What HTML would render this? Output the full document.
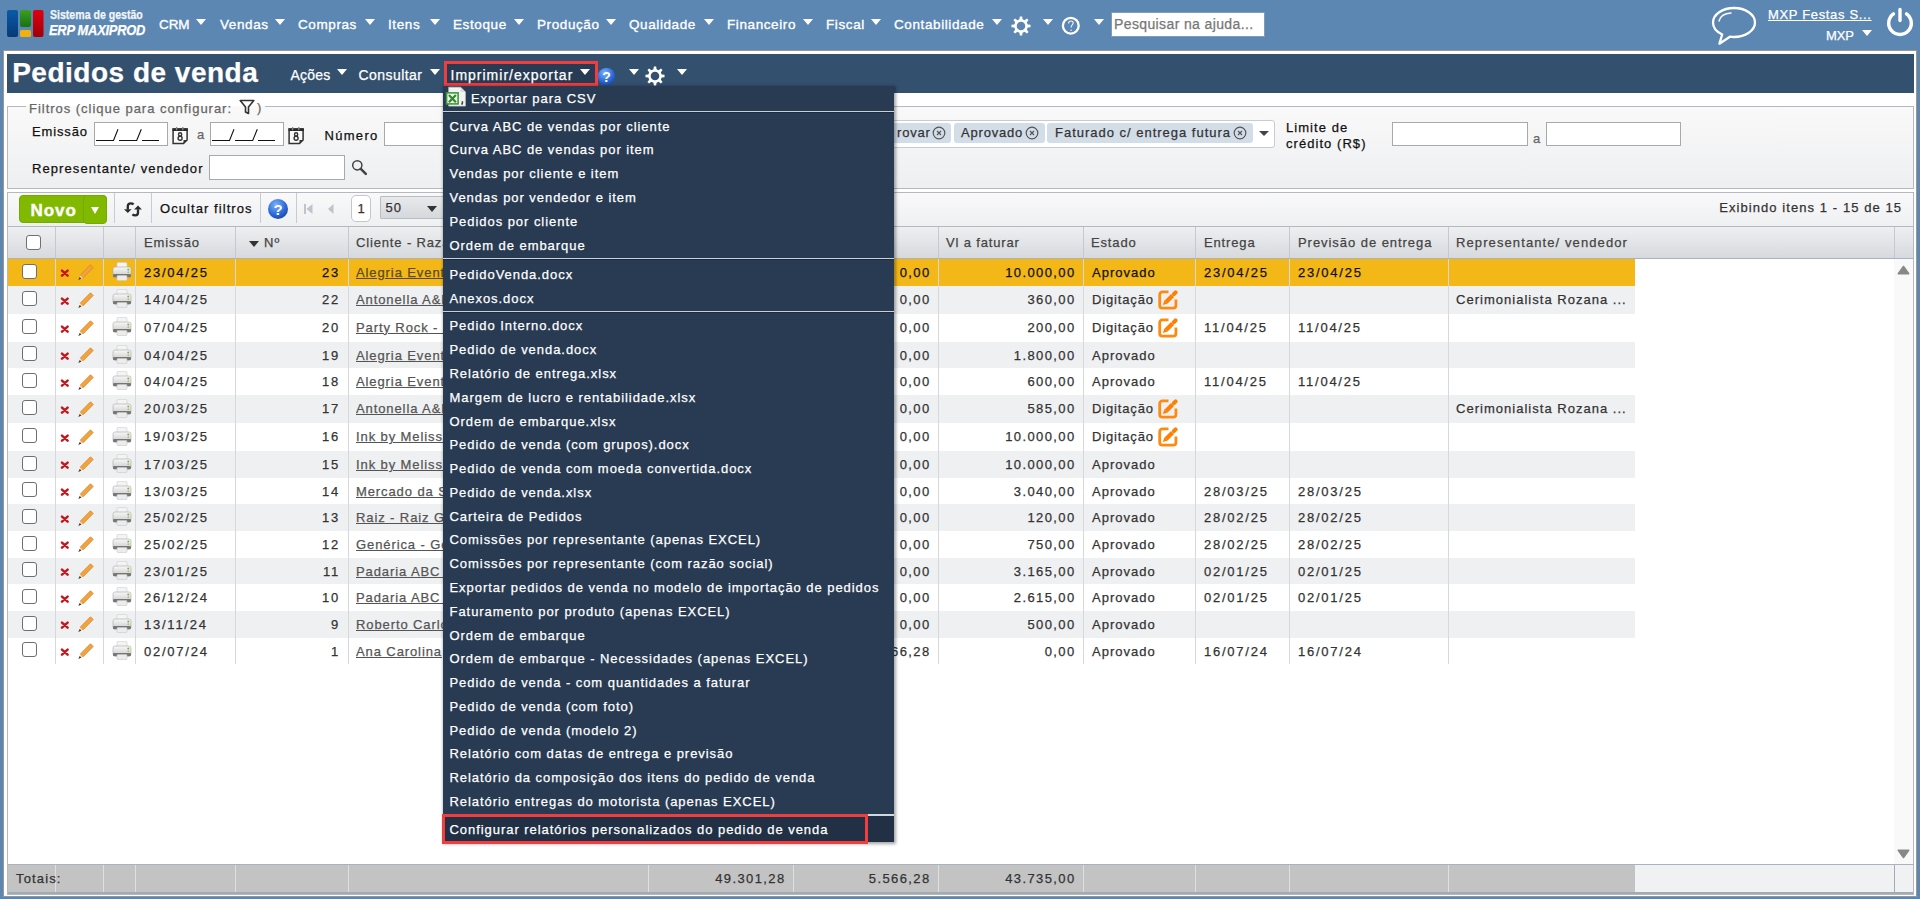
<!DOCTYPE html>
<html><head><meta charset="utf-8">
<style>
*{box-sizing:border-box;margin:0;padding:0}
html,body{width:1920px;height:899px;overflow:hidden}
body{position:relative;background:#5c87b3;font-family:"Liberation Sans",sans-serif;font-size:13px;color:#222;letter-spacing:.9px;-webkit-text-stroke-width:.25px}
.a{position:absolute;white-space:nowrap}
.tri{position:absolute;width:0;height:0;border-left:5px solid transparent;border-right:5px solid transparent;border-top:6px solid #fff}
.tm{position:absolute;top:16px;color:#fff;font-size:13.5px;letter-spacing:.6px;line-height:17px;-webkit-text-stroke-width:.35px}
.panel{position:absolute;left:3px;top:50px;width:1914px;height:847px;background:#fff;border:1px solid #9c9690}
.band{position:absolute;left:7px;top:54px;width:1907px;height:39px;background:#34506f}
.bm{position:absolute;top:66px;color:#fff;font-size:14px;letter-spacing:.85px;line-height:18px}
.inp{background:#fff;border:1px solid #a9a9a9}
.tag{top:123px;height:20px;background:#d3dde8;border-radius:3px}
.num{font-size:13px;letter-spacing:1.76px}
.mn{font-size:13px;letter-spacing:1.38px}
.mi{color:#fff;font-size:13px;letter-spacing:.95px;line-height:16px}
</style></head><body>
<!-- TOP BAR -->
<svg class="a" style="left:6px;top:9px" width="40" height="30" viewBox="0 0 40 30">
 <defs>
  <linearGradient id="lb" x1="0" y1="0" x2="0" y2="1"><stop offset="0" stop-color="#0a5aa8"/><stop offset="1" stop-color="#063a78"/></linearGradient>
  <linearGradient id="lg" x1="0" y1="0" x2="0" y2="1"><stop offset="0" stop-color="#3aa020"/><stop offset="1" stop-color="#1a7010"/></linearGradient>
  <linearGradient id="lr" x1="0" y1="0" x2="0" y2="1"><stop offset="0" stop-color="#e00010"/><stop offset="1" stop-color="#a00008"/></linearGradient>
 </defs>
 <rect x="1" y="1" width="11" height="27" rx="2" fill="url(#lb)"/>
 <rect x="14" y="1" width="11" height="17" rx="2" fill="url(#lg)"/>
 <rect x="14" y="21" width="11" height="7" rx="1.5" fill="#f0b010"/>
 <rect x="27" y="1" width="10.5" height="27" rx="2" fill="url(#lr)"/>
</svg>
<div class="a" style="left:50px;top:8px;color:#fff;font-size:12px;font-weight:700;letter-spacing:0;line-height:14px;opacity:.92;transform:scaleX(.88);transform-origin:0 0">Sistema de gestão</div>
<div class="a" style="left:49px;top:21px;color:#fff;font-size:15px;font-weight:700;font-style:italic;letter-spacing:-.3px;line-height:17px;transform:scaleX(.86);transform-origin:0 0">ERP MAXIPROD</div>

<div class="tm" style="left:159px;letter-spacing:-.1px">CRM</div><div class="tri" style="left:196px;top:19px"></div>
<div class="tm" style="left:220px">Vendas</div><div class="tri" style="left:275px;top:19px"></div>
<div class="tm" style="left:298px">Compras</div><div class="tri" style="left:365px;top:19px"></div>
<div class="tm" style="left:388px">Itens</div><div class="tri" style="left:430px;top:19px"></div>
<div class="tm" style="left:453px">Estoque</div><div class="tri" style="left:514px;top:19px"></div>
<div class="tm" style="left:537px">Produção</div><div class="tri" style="left:606px;top:19px"></div>
<div class="tm" style="left:629px">Qualidade</div><div class="tri" style="left:704px;top:19px"></div>
<div class="tm" style="left:727px">Financeiro</div><div class="tri" style="left:803px;top:19px"></div>
<div class="tm" style="left:826px">Fiscal</div><div class="tri" style="left:871px;top:19px"></div>
<div class="tm" style="left:894px">Contabilidade</div><div class="tri" style="left:992px;top:19px"></div>
<!-- gear -->
<svg class="a" style="left:1011px;top:16px" width="20" height="20" viewBox="0 0 20 20"><path fill="#fff" fill-rule="evenodd" d="M8.45 3.28 L8.83 0.47 L11.17 0.47 L11.55 3.28 L12.59 3.75 L13.66 4.15 L15.91 2.44 L17.56 4.09 L15.85 6.34 L16.25 7.41 L16.72 8.45 L19.53 8.83 L19.53 11.17 L16.72 11.55 L16.25 12.59 L15.85 13.66 L17.56 15.91 L15.91 17.56 L13.66 15.85 L12.59 16.25 L11.55 16.72 L11.17 19.53 L8.83 19.53 L8.45 16.72 L7.41 16.25 L6.34 15.85 L4.09 17.56 L2.44 15.91 L4.15 13.66 L3.75 12.59 L3.28 11.55 L0.47 11.17 L0.47 8.83 L3.28 8.45 L3.75 7.41 L4.15 6.34 L2.44 4.09 L4.09 2.44 L6.34 4.15 L7.41 3.75ZM14.3 10A4.3 4.3 0 1 0 5.7 10A4.3 4.3 0 1 0 14.3 10Z"/></svg>
<div class="tri" style="left:1043px;top:19px"></div>
<!-- help outline -->
<svg class="a" style="left:1060.6px;top:16px" width="20" height="20" viewBox="0 0 20 20"><circle cx="9.8" cy="9.7" r="7.9" fill="none" stroke="#fff" stroke-width="2.3"/><path d="M7.6 7.4c0-1.5 1-2.4 2.3-2.4s2.3.9 2.3 2.1c0 1.6-2 1.9-2 3.7v.7" fill="none" stroke="#e8eef5" stroke-width="1.2"/><circle cx="10.1" cy="14.2" r=".8" fill="#e8eef5"/></svg>
<div class="tri" style="left:1094px;top:19px"></div>
<div class="a" style="left:1111px;top:12px;width:154px;height:25px;background:#fff;border:1px solid #7f9cbf"></div>
<div class="a" style="left:1114px;top:16px;color:#777;font-size:14px;letter-spacing:.38px;line-height:17px">Pesquisar na ajuda...</div>
<!-- chat -->
<svg class="a" style="left:1710px;top:5px" width="48" height="42" viewBox="0 0 48 42"><path d="M24 3C12.5 3 3 9.6 3 17.5c0 5 3.6 9.4 9.2 12l-2.8 9.2 10.5-7c1.3.2 2.7.3 4.1.3 11.5 0 21-6.6 21-14.5S35.5 3 24 3z" fill="none" stroke="#fff" stroke-width="2.3" stroke-linejoin="round"/><path d="M9 16c1-4.5 5.5-7.5 12-8" fill="none" stroke="#fff" stroke-width="1.4" stroke-linecap="round"/></svg>
<div class="a" style="left:1768px;top:7px;color:#fff;font-size:13px;letter-spacing:.66px;line-height:16px;text-decoration:underline">MXP Festas S...</div>
<div class="a" style="left:1826px;top:28px;color:#fff;font-size:13px;letter-spacing:-.1px;line-height:16px">MXP</div>
<div class="tri" style="left:1862px;top:30px"></div>
<!-- power -->
<svg class="a" style="left:1886px;top:6px" width="28" height="32" viewBox="0 0 28 32"><path d="M7.5 7.9A11.3 11.3 0 1 0 20.5 7.9" fill="none" stroke="#fff" stroke-width="3.4" stroke-linecap="round"/><line x1="14" y1="3.5" x2="14" y2="14.6" stroke="#fff" stroke-width="3.4" stroke-linecap="round"/></svg>

<!-- PANEL -->
<div class="panel"></div>
<div class="band"></div>
<div class="a" style="left:12.2px;top:57px;color:#fff;font-size:28px;font-weight:700;letter-spacing:.5px;line-height:32px">Pedidos de venda</div>
<div class="bm" style="left:290.5px;letter-spacing:.2px">Ações</div><div class="tri" style="left:337px;top:69px"></div>
<div class="bm" style="left:358.5px;letter-spacing:.45px">Consultar</div><div class="tri" style="left:430px;top:69px"></div>
<div class="a" style="left:444px;top:61px;width:154px;height:25px;background:#283b54;border:3px solid #ef3d40"></div>
<div class="bm" style="left:450.5px;letter-spacing:1px">Imprimir/exportar</div><div class="tri" style="left:580px;top:69px"></div>


<!-- band icons -->
<svg class="a" style="left:597px;top:66px" width="19" height="20" viewBox="0 0 19 20"><defs><radialGradient id="hb" cx=".4" cy=".3" r=".8"><stop offset="0" stop-color="#7fb2ff"/><stop offset=".6" stop-color="#2a6ad8"/><stop offset="1" stop-color="#1a3f9a"/></radialGradient></defs><circle cx="9.5" cy="10.5" r="8.8" fill="url(#hb)"/><text x="9.6" y="15.5" text-anchor="middle" font-family="Liberation Sans" font-weight="700" font-size="14" fill="#fff" letter-spacing="0">?</text></svg>
<div class="tri" style="left:629px;top:69px"></div>
<svg class="a" style="left:645px;top:66px" width="20" height="20" viewBox="0 0 20 20"><path fill="#fff" fill-rule="evenodd" d="M8.45 3.28 L8.83 0.47 L11.17 0.47 L11.55 3.28 L12.59 3.75 L13.66 4.15 L15.91 2.44 L17.56 4.09 L15.85 6.34 L16.25 7.41 L16.72 8.45 L19.53 8.83 L19.53 11.17 L16.72 11.55 L16.25 12.59 L15.85 13.66 L17.56 15.91 L15.91 17.56 L13.66 15.85 L12.59 16.25 L11.55 16.72 L11.17 19.53 L8.83 19.53 L8.45 16.72 L7.41 16.25 L6.34 15.85 L4.09 17.56 L2.44 15.91 L4.15 13.66 L3.75 12.59 L3.28 11.55 L0.47 11.17 L0.47 8.83 L3.28 8.45 L3.75 7.41 L4.15 6.34 L2.44 4.09 L4.09 2.44 L6.34 4.15 L7.41 3.75ZM14.3 10A4.3 4.3 0 1 0 5.7 10A4.3 4.3 0 1 0 14.3 10Z"/></svg>
<div class="tri" style="left:677px;top:69px"></div>

<!-- FILTER FIELDSET -->
<div class="a" style="left:7px;top:106px;width:1907px;height:83px;border:1px solid #b4b9c0;background:linear-gradient(#f9f9f9,#eeeff1)"></div>
<div class="a" style="left:26px;top:106px;width:239px;height:1px;background:#f9f9f9"></div>
<div class="a" style="left:29px;top:100.5px;color:#666;font-size:13px;letter-spacing:.97px;line-height:16px">Filtros (clique para configurar:</div>
<svg class="a" style="left:239px;top:99px" width="16" height="16" viewBox="0 0 16 16"><path d="M1.2 1.5h13.6L9.5 8v6.5L6.5 13V8z" fill="none" stroke="#333" stroke-width="1.6" stroke-linejoin="round"/></svg>
<div class="a" style="left:257px;top:100px;color:#666;font-size:13px;line-height:16px">)</div>

<div class="a" style="left:32px;top:124px;color:#111;font-size:13px;letter-spacing:.85px;line-height:16px">Emissão</div>
<div class="a inp" style="left:94px;top:122px;width:74px;height:24px"></div>
<svg class="a" style="left:96px;top:128px" width="64" height="14" viewBox="0 0 64 14"><path d="M0 12.5h17.5l4.5-11.3M23 12.5h17.7l4.6-11.3M46 12.5h17" fill="none" stroke="#111" stroke-width="1.1"/></svg>
<svg class="a" style="left:172px;top:127px" width="17" height="18" viewBox="0 0 17 18"><path d="M1.1 2.1h14v10.8l-3.6 3.7H1.1z" fill="#fbfbfb" stroke="#333" stroke-width="1.5"/><rect x="0.5" y="1.4" width="15.3" height="2.6" fill="#2a2a2a"/><path d="M4.6 0v3.2M10.8 0v3.2" stroke="#888" stroke-width="1.3"/><circle cx="8.1" cy="7.4" r="1.6" fill="none" stroke="#333" stroke-width="1.4"/><circle cx="8.1" cy="11.3" r="2" fill="none" stroke="#333" stroke-width="1.4"/><path d="M11.5 16.6v-3.7h3.6z" fill="#333"/></svg>
<div class="a" style="left:197px;top:127px;color:#666;font-size:13px;line-height:16px">a</div>
<div class="a inp" style="left:210px;top:122px;width:74px;height:24px"></div>
<svg class="a" style="left:212px;top:128px" width="64" height="14" viewBox="0 0 64 14"><path d="M0 12.5h17.5l4.5-11.3M23 12.5h17.7l4.6-11.3M46 12.5h17" fill="none" stroke="#111" stroke-width="1.1"/></svg>
<svg class="a" style="left:288px;top:127px" width="17" height="18" viewBox="0 0 17 18"><path d="M1.1 2.1h14v10.8l-3.6 3.7H1.1z" fill="#fbfbfb" stroke="#333" stroke-width="1.5"/><rect x="0.5" y="1.4" width="15.3" height="2.6" fill="#2a2a2a"/><path d="M4.6 0v3.2M10.8 0v3.2" stroke="#888" stroke-width="1.3"/><circle cx="8.1" cy="7.4" r="1.6" fill="none" stroke="#333" stroke-width="1.4"/><circle cx="8.1" cy="11.3" r="2" fill="none" stroke="#333" stroke-width="1.4"/><path d="M11.5 16.6v-3.7h3.6z" fill="#333"/></svg>
<div class="a" style="left:324.5px;top:128px;color:#111;font-size:13px;letter-spacing:1.3px;line-height:16px">Número</div>
<div class="a inp" style="left:384px;top:122px;width:70px;height:24px"></div>
<div class="a" style="left:32px;top:161px;color:#111;font-size:13px;letter-spacing:1.08px;line-height:16px">Representante/ vendedor</div>
<div class="a inp" style="left:209px;top:155px;width:136px;height:25px"></div>
<svg class="a" style="left:351px;top:159px" width="17" height="17" viewBox="0 0 17 17"><circle cx="6.3" cy="6.3" r="4.6" fill="none" stroke="#444" stroke-width="1.5"/><path d="M9.8 9.8l5 5" stroke="#444" stroke-width="2.6" stroke-linecap="round"/></svg>

<div class="a" style="left:880px;top:120px;width:395px;height:28px;background:#fff;border:1px solid #c8ccd2;border-radius:3px"></div>
<div class="a tag" style="left:880px;width:71px"></div>
<div class="a" style="left:897px;top:125px;font-size:13px;letter-spacing:.8px;line-height:16px;color:#333">rovar</div>
<div class="a tag" style="left:954px;width:91px"></div>
<div class="a" style="left:961px;top:125px;font-size:13px;letter-spacing:.8px;line-height:16px;color:#333">Aprovado</div>
<div class="a tag" style="left:1047px;width:206px"></div>
<div class="a" style="left:1055px;top:125px;font-size:13px;letter-spacing:.99px;line-height:16px;color:#333">Faturado c/ entrega futura</div>
<svg class="a xc" style="left:932px;top:126px" width="14" height="14" viewBox="0 0 14 14"><circle cx="7" cy="7" r="5.8" fill="none" stroke="#555" stroke-width="1.2"/><path d="M5 5l4 4M9 5l-4 4" stroke="#555" stroke-width="1.2"/></svg>
<svg class="a xc" style="left:1025px;top:126px" width="14" height="14" viewBox="0 0 14 14"><circle cx="7" cy="7" r="5.8" fill="none" stroke="#555" stroke-width="1.2"/><path d="M5 5l4 4M9 5l-4 4" stroke="#555" stroke-width="1.2"/></svg>
<svg class="a xc" style="left:1233px;top:126px" width="14" height="14" viewBox="0 0 14 14"><circle cx="7" cy="7" r="5.8" fill="none" stroke="#555" stroke-width="1.2"/><path d="M5 5l4 4M9 5l-4 4" stroke="#555" stroke-width="1.2"/></svg>
<div class="a" style="left:1259px;top:131px;width:0;height:0;border-left:5px solid transparent;border-right:5px solid transparent;border-top:5px solid #444"></div>

<div class="a" style="left:1286px;top:119.5px;color:#111;font-size:13px;letter-spacing:1.05px;line-height:16px">Limite de<br>crédito (R$)</div>
<div class="a inp" style="left:1392px;top:122px;width:136px;height:24px"></div>
<div class="a" style="left:1533px;top:131px;color:#666;font-size:13px;line-height:16px">a</div>
<div class="a inp" style="left:1546px;top:122px;width:135px;height:24px"></div>

<!-- GRID START -->
<div class="a" style="left:7px;top:192px;width:1907px;height:703px;border:1px solid #b4b9c0;background:#fff"></div>
<div class="a" style="left:8px;top:193px;width:1905px;height:34px;background:linear-gradient(#f9f9fa,#eff0f2);border-bottom:1px solid #b4b9c0"></div>
<div class="a" style="left:19px;top:195px;width:88px;height:28px;background:#80b900;border:1px solid #74ab00;border-radius:4px"></div>
<div class="a" style="left:82.5px;top:195px;width:24.5px;height:29px;background:#80b900;border:1px solid #74ab00;border-radius:4px"></div>
<div class="a" style="left:30.5px;top:201px;color:#fff;font-size:17px;font-weight:700;letter-spacing:.95px;line-height:20px;-webkit-text-stroke-width:.4px">Novo</div>
<div class="a" style="left:91px;top:207px;width:0;height:0;border-left:4px solid transparent;border-right:4px solid transparent;border-top:7px solid #fff"></div>
<div class="a" style="left:114px;top:193px;width:1px;height:30px;background:#c8ccd2"></div>
<div class="a" style="left:151px;top:193px;width:1px;height:30px;background:#c8ccd2"></div>
<div class="a" style="left:260px;top:193px;width:1px;height:30px;background:#c8ccd2"></div>
<div class="a" style="left:296px;top:193px;width:1px;height:30px;background:#c8ccd2"></div>
<svg class="a" style="left:123px;top:201px" width="20" height="17" viewBox="0 0 20 17"><path d="M10.6 3.3C9.8 2.6 8.8 2.4 7.6 2.4 5.9 2.4 4.8 3.5 4.8 5.2V8.6" fill="none" stroke="#2a2a2a" stroke-width="2.3"/><path d="M1 8.2h7.6L4.8 12z" fill="#2a2a2a"/><path d="M9.4 13.4c.8.7 1.8.9 3 .9 1.7 0 2.6-1.1 2.6-2.8V8.2" fill="none" stroke="#2a2a2a" stroke-width="2.3"/><path d="M11.1 8.6h7.8L15 4.4z" fill="#2a2a2a"/></svg>
<div class="a" style="left:160px;top:201px;color:#111;font-size:13px;letter-spacing:1.07px;line-height:16px">Ocultar filtros</div>
<svg class="a" style="left:267px;top:198px" width="22" height="22" viewBox="0 0 22 22"><defs><radialGradient id="hb2" cx=".4" cy=".3" r=".8"><stop offset="0" stop-color="#7fb2ff"/><stop offset=".6" stop-color="#2a6ad8"/><stop offset="1" stop-color="#1a3f9a"/></radialGradient></defs><circle cx="11" cy="11" r="10" fill="url(#hb2)"/><text x="11.2" y="16.5" text-anchor="middle" font-family="Liberation Sans" font-weight="700" font-size="15" fill="#fff" letter-spacing="0">?</text></svg>
<svg class="a" style="left:303px;top:203px" width="32" height="12" viewBox="0 0 32 12"><rect x="1" y="1" width="2" height="10" fill="#c0c4ca"/><path d="M9.5 1v10L3.5 6z" fill="#c0c4ca"/><path d="M30.5 1v10L25 6z" fill="#c0c4ca"/></svg>
<div class="a" style="left:351px;top:195px;width:20px;height:27px;background:#fff;border:1px solid #c3c7cd;border-radius:5px"></div>
<div class="a" style="left:357.5px;top:200.5px;color:#333;font-size:13px;letter-spacing:.9px;line-height:16px">1</div>
<div class="a" style="left:380px;top:196px;width:70px;height:23px;background:linear-gradient(#e8e9eb,#d5d8dc);border:1px solid #b9bdc3;border-radius:1px"></div>
<div class="a" style="left:385.5px;top:199.5px;color:#333;font-size:13px;letter-spacing:1.1px;line-height:16px">50</div>
<div class="a" style="left:427px;top:206px;width:0;height:0;border-left:5px solid transparent;border-right:5px solid transparent;border-top:6px solid #333"></div>
<div class="a" style="right:19px;top:200px;color:#333;font-size:13px;letter-spacing:1.07px;line-height:16px">Exibindo itens 1 - 15 de 1<span style="letter-spacing:0">5</span></div>
<div class="a" style="left:8px;top:227px;width:1905px;height:32px;background:linear-gradient(#eeeff1,#d6d9dd);border-bottom:1px solid #a9b2bf"></div>
<div class="a" style="left:55px;top:227px;width:1px;height:31px;background:#c4c9d0"></div>
<div class="a" style="left:103px;top:227px;width:1px;height:31px;background:#c4c9d0"></div>
<div class="a" style="left:135px;top:227px;width:1px;height:31px;background:#c4c9d0"></div>
<div class="a" style="left:235px;top:227px;width:1px;height:31px;background:#c4c9d0"></div>
<div class="a" style="left:348px;top:227px;width:1px;height:31px;background:#c4c9d0"></div>
<div class="a" style="left:648px;top:227px;width:1px;height:31px;background:#c4c9d0"></div>
<div class="a" style="left:793px;top:227px;width:1px;height:31px;background:#c4c9d0"></div>
<div class="a" style="left:938px;top:227px;width:1px;height:31px;background:#c4c9d0"></div>
<div class="a" style="left:1083px;top:227px;width:1px;height:31px;background:#c4c9d0"></div>
<div class="a" style="left:1195px;top:227px;width:1px;height:31px;background:#c4c9d0"></div>
<div class="a" style="left:1289px;top:227px;width:1px;height:31px;background:#c4c9d0"></div>
<div class="a" style="left:1448px;top:227px;width:1px;height:31px;background:#c4c9d0"></div>
<div class="a" style="left:1894px;top:227px;width:1px;height:31px;background:#c4c9d0"></div>
<div class="a" style="left:26px;top:235px;width:15px;height:15px;background:#fff;border:1.3px solid #707070;border-radius:3px"></div>
<div class="a" style="left:144px;top:235px;color:#444;font-size:13px;letter-spacing:.85px;line-height:16px">Emissão</div>
<div class="a" style="left:264px;top:235px;color:#444;font-size:13px;letter-spacing:1.2px;line-height:16px">Nº</div>
<div class="a" style="left:356px;top:235px;color:#444;font-size:13px;letter-spacing:.85px;line-height:16px">Cliente - Razão social</div>
<div class="a" style="left:650px;top:235px;color:#444;font-size:13px;letter-spacing:.85px;line-height:16px">Vl total</div>
<div class="a" style="left:795px;top:235px;color:#444;font-size:13px;letter-spacing:.85px;line-height:16px">Vl faturado</div>
<div class="a" style="left:946px;top:235px;color:#444;font-size:13px;letter-spacing:.85px;line-height:16px">Vl a faturar</div>
<div class="a" style="left:1091px;top:235px;color:#444;font-size:13px;letter-spacing:.85px;line-height:16px">Estado</div>
<div class="a" style="left:1204px;top:235px;color:#444;font-size:13px;letter-spacing:.85px;line-height:16px">Entrega</div>
<div class="a" style="left:1298px;top:235px;color:#444;font-size:13px;letter-spacing:.95px;line-height:16px">Previsão de entrega</div>
<div class="a" style="left:1456px;top:235px;color:#444;font-size:13px;letter-spacing:1.1px;line-height:16px">Representante/ vendedor</div>
<div class="a" style="left:249px;top:241px;width:0;height:0;border-left:5px solid transparent;border-right:5px solid transparent;border-top:6px solid #333"></div>
<div class="a" style="left:8px;top:259.00px;width:1627px;height:26.67px;background:#f3b817"></div>
<div class="a" style="left:55px;top:259.00px;width:1px;height:26.67px;background:#d6d8dc"></div>
<div class="a" style="left:103px;top:259.00px;width:1px;height:26.67px;background:#d6d8dc"></div>
<div class="a" style="left:135px;top:259.00px;width:1px;height:26.67px;background:#d6d8dc"></div>
<div class="a" style="left:235px;top:259.00px;width:1px;height:26.67px;background:#d6d8dc"></div>
<div class="a" style="left:348px;top:259.00px;width:1px;height:26.67px;background:#d6d8dc"></div>
<div class="a" style="left:648px;top:259.00px;width:1px;height:26.67px;background:#d6d8dc"></div>
<div class="a" style="left:793px;top:259.00px;width:1px;height:26.67px;background:#d6d8dc"></div>
<div class="a" style="left:938px;top:259.00px;width:1px;height:26.67px;background:#d6d8dc"></div>
<div class="a" style="left:1083px;top:259.00px;width:1px;height:26.67px;background:#d6d8dc"></div>
<div class="a" style="left:1195px;top:259.00px;width:1px;height:26.67px;background:#d6d8dc"></div>
<div class="a" style="left:1289px;top:259.00px;width:1px;height:26.67px;background:#d6d8dc"></div>
<div class="a" style="left:1448px;top:259.00px;width:1px;height:26.67px;background:#d6d8dc"></div>
<div class="a" style="left:22px;top:263.53px;width:15px;height:15px;background:#fff;border:1.3px solid #6e6e6e;border-radius:3px"></div>
<svg class="a" style="left:60px;top:269.33px" width="10" height="9" viewBox="0 0 10 9"><path d="M2 1.6l5.6 5M7.6 1.6l-5.6 5" stroke="#c4161c" stroke-width="2.5" stroke-linecap="round"/></svg>
<svg class="a" style="left:76px;top:263.33px" width="19" height="18" viewBox="0 0 19 18"><path d="M4.2 12.2L14.5 1.8l2.7 2.7L6.9 14.9z" fill="#f3a33c" stroke="#d9822a" stroke-width=".8"/><path d="M4.2 12.2l2.7 2.7-3.6 1.2z" fill="#f6dcb0"/><path d="M2.3 17l1.4-3.1 1.7 1.7z" fill="#333"/></svg>
<svg class="a" style="left:112px;top:261.83px" width="20" height="19" viewBox="0 0 20 19"><defs><linearGradient id="pg0" x1="0" y1="0" x2="0" y2="1"><stop offset="0" stop-color="#f8f8f8"/><stop offset=".7" stop-color="#d8d8d8"/><stop offset="1" stop-color="#a8a8a8"/></linearGradient></defs><rect x="5" y="0.5" width="10" height="6" rx="1" fill="#f4f4f4" stroke="#cfcfcf" stroke-width=".6"/><rect x="1" y="5" width="18" height="10" rx="2" fill="url(#pg0)" stroke="#aaa" stroke-width=".6"/><rect x="1" y="12" width="18" height="3.2" rx="1.2" fill="#767676"/><rect x="5" y="13.5" width="10" height="5" rx="1" fill="#ececec" stroke="#c8c8c8" stroke-width=".6"/><circle cx="16.3" cy="7.6" r="1" fill="#5fc24a"/><circle cx="16.3" cy="10.2" r=".9" fill="#c8b84a"/></svg>
<div class="a num" style="left:144px;line-height:26.67px;top:260.00px;height:26.67px;color:#111">23/04/25</div>
<div class="a num" style="left:235px;width:105px;text-align:right;line-height:26.67px;top:260.00px;height:26.67px;color:#111">23</div>
<div class="a" style="left:356px;width:90px;overflow:hidden;line-height:26.67px;top:260.00px;height:26.67px;color:#5a4a20;text-decoration:underline;letter-spacing:.9px">Alegria Eventos</div>
<div class="a mn" style="left:793px;width:137.5px;text-align:right;line-height:26.67px;top:260.00px;height:26.67px;color:#111">0,00</div>
<div class="a mn" style="left:938px;width:137.5px;text-align:right;line-height:26.67px;top:260.00px;height:26.67px;color:#111">10.000,00</div>
<div class="a" style="left:1092px;line-height:26.67px;top:260.00px;height:26.67px;color:#111;letter-spacing:1px">Aprovado</div>
<div class="a num" style="left:1204px;line-height:26.67px;top:260.00px;height:26.67px;color:#111">23/04/25</div>
<div class="a num" style="left:1298px;line-height:26.67px;top:260.00px;height:26.67px;color:#111">23/04/25</div>
<div class="a" style="left:8px;top:285.67px;width:1627px;height:28.00px;background:#eff0f2"></div>
<div class="a" style="left:55px;top:285.67px;width:1px;height:28.00px;background:#d6d8dc"></div>
<div class="a" style="left:103px;top:285.67px;width:1px;height:28.00px;background:#d6d8dc"></div>
<div class="a" style="left:135px;top:285.67px;width:1px;height:28.00px;background:#d6d8dc"></div>
<div class="a" style="left:235px;top:285.67px;width:1px;height:28.00px;background:#d6d8dc"></div>
<div class="a" style="left:348px;top:285.67px;width:1px;height:28.00px;background:#d6d8dc"></div>
<div class="a" style="left:648px;top:285.67px;width:1px;height:28.00px;background:#d6d8dc"></div>
<div class="a" style="left:793px;top:285.67px;width:1px;height:28.00px;background:#d6d8dc"></div>
<div class="a" style="left:938px;top:285.67px;width:1px;height:28.00px;background:#d6d8dc"></div>
<div class="a" style="left:1083px;top:285.67px;width:1px;height:28.00px;background:#d6d8dc"></div>
<div class="a" style="left:1195px;top:285.67px;width:1px;height:28.00px;background:#d6d8dc"></div>
<div class="a" style="left:1289px;top:285.67px;width:1px;height:28.00px;background:#d6d8dc"></div>
<div class="a" style="left:1448px;top:285.67px;width:1px;height:28.00px;background:#d6d8dc"></div>
<div class="a" style="left:22px;top:290.87px;width:15px;height:15px;background:#fff;border:1.3px solid #6e6e6e;border-radius:3px"></div>
<svg class="a" style="left:60px;top:296.67px" width="10" height="9" viewBox="0 0 10 9"><path d="M2 1.6l5.6 5M7.6 1.6l-5.6 5" stroke="#c4161c" stroke-width="2.5" stroke-linecap="round"/></svg>
<svg class="a" style="left:76px;top:290.67px" width="19" height="18" viewBox="0 0 19 18"><path d="M4.2 12.2L14.5 1.8l2.7 2.7L6.9 14.9z" fill="#f3a33c" stroke="#d9822a" stroke-width=".8"/><path d="M4.2 12.2l2.7 2.7-3.6 1.2z" fill="#f6dcb0"/><path d="M2.3 17l1.4-3.1 1.7 1.7z" fill="#333"/></svg>
<svg class="a" style="left:112px;top:289.17px" width="20" height="19" viewBox="0 0 20 19"><defs><linearGradient id="pg1" x1="0" y1="0" x2="0" y2="1"><stop offset="0" stop-color="#f8f8f8"/><stop offset=".7" stop-color="#d8d8d8"/><stop offset="1" stop-color="#a8a8a8"/></linearGradient></defs><rect x="5" y="0.5" width="10" height="6" rx="1" fill="#f4f4f4" stroke="#cfcfcf" stroke-width=".6"/><rect x="1" y="5" width="18" height="10" rx="2" fill="url(#pg1)" stroke="#aaa" stroke-width=".6"/><rect x="1" y="12" width="18" height="3.2" rx="1.2" fill="#767676"/><rect x="5" y="13.5" width="10" height="5" rx="1" fill="#ececec" stroke="#c8c8c8" stroke-width=".6"/><circle cx="16.3" cy="7.6" r="1" fill="#5fc24a"/><circle cx="16.3" cy="10.2" r=".9" fill="#c8b84a"/></svg>
<div class="a num" style="left:144px;line-height:28.00px;top:285.67px;height:28.00px;color:#333">14/04/25</div>
<div class="a num" style="left:235px;width:105px;text-align:right;line-height:28.00px;top:285.67px;height:28.00px;color:#333">22</div>
<div class="a" style="left:356px;width:90px;overflow:hidden;line-height:28.00px;top:285.67px;height:28.00px;color:#555;text-decoration:underline;letter-spacing:.9px">Antonella A&amp;B Eventos</div>
<div class="a mn" style="left:793px;width:137.5px;text-align:right;line-height:28.00px;top:285.67px;height:28.00px;color:#333">0,00</div>
<div class="a mn" style="left:938px;width:137.5px;text-align:right;line-height:28.00px;top:285.67px;height:28.00px;color:#333">360,00</div>
<div class="a" style="left:1092px;line-height:28.00px;top:285.67px;height:28.00px;color:#333;letter-spacing:.85px">Digitação</div>
<svg class="a" style="left:1158px;top:289.97px" width="20" height="20" viewBox="0 0 20 20"><path d="M10.5 1.9H4.3A2.6 2.6 0 0 0 1.7 4.5v11A2.6 2.6 0 0 0 4.3 18.1h11a2.6 2.6 0 0 0 2.6-2.6V9.6" fill="none" stroke="#ff8a10" stroke-width="2.8"/><path d="M8.1 11.9l6.5-6.5" stroke="#ff8000" stroke-width="4.3"/><path d="M6.4 10.2l3.4 3.4-4.9 1.5z" fill="#ff8000"/><path d="M16 4l1.6-1.6" stroke="#ff8000" stroke-width="4" stroke-linecap="round"/></svg>
<div class="a num" style="left:1204px;line-height:28.00px;top:285.67px;height:28.00px;color:#333"></div>
<div class="a num" style="left:1298px;line-height:28.00px;top:285.67px;height:28.00px;color:#333"></div>
<div class="a" style="left:1456px;line-height:28.00px;top:285.67px;height:28.00px;color:#333;letter-spacing:1.02px">Cerimonialista Rozana ...</div>
<div class="a" style="left:8px;top:313.67px;width:1627px;height:28.00px;background:#fff"></div>
<div class="a" style="left:55px;top:313.67px;width:1px;height:28.00px;background:#d6d8dc"></div>
<div class="a" style="left:103px;top:313.67px;width:1px;height:28.00px;background:#d6d8dc"></div>
<div class="a" style="left:135px;top:313.67px;width:1px;height:28.00px;background:#d6d8dc"></div>
<div class="a" style="left:235px;top:313.67px;width:1px;height:28.00px;background:#d6d8dc"></div>
<div class="a" style="left:348px;top:313.67px;width:1px;height:28.00px;background:#d6d8dc"></div>
<div class="a" style="left:648px;top:313.67px;width:1px;height:28.00px;background:#d6d8dc"></div>
<div class="a" style="left:793px;top:313.67px;width:1px;height:28.00px;background:#d6d8dc"></div>
<div class="a" style="left:938px;top:313.67px;width:1px;height:28.00px;background:#d6d8dc"></div>
<div class="a" style="left:1083px;top:313.67px;width:1px;height:28.00px;background:#d6d8dc"></div>
<div class="a" style="left:1195px;top:313.67px;width:1px;height:28.00px;background:#d6d8dc"></div>
<div class="a" style="left:1289px;top:313.67px;width:1px;height:28.00px;background:#d6d8dc"></div>
<div class="a" style="left:1448px;top:313.67px;width:1px;height:28.00px;background:#d6d8dc"></div>
<div class="a" style="left:22px;top:318.87px;width:15px;height:15px;background:#fff;border:1.3px solid #6e6e6e;border-radius:3px"></div>
<svg class="a" style="left:60px;top:324.67px" width="10" height="9" viewBox="0 0 10 9"><path d="M2 1.6l5.6 5M7.6 1.6l-5.6 5" stroke="#c4161c" stroke-width="2.5" stroke-linecap="round"/></svg>
<svg class="a" style="left:76px;top:318.67px" width="19" height="18" viewBox="0 0 19 18"><path d="M4.2 12.2L14.5 1.8l2.7 2.7L6.9 14.9z" fill="#f3a33c" stroke="#d9822a" stroke-width=".8"/><path d="M4.2 12.2l2.7 2.7-3.6 1.2z" fill="#f6dcb0"/><path d="M2.3 17l1.4-3.1 1.7 1.7z" fill="#333"/></svg>
<svg class="a" style="left:112px;top:317.17px" width="20" height="19" viewBox="0 0 20 19"><defs><linearGradient id="pg2" x1="0" y1="0" x2="0" y2="1"><stop offset="0" stop-color="#f8f8f8"/><stop offset=".7" stop-color="#d8d8d8"/><stop offset="1" stop-color="#a8a8a8"/></linearGradient></defs><rect x="5" y="0.5" width="10" height="6" rx="1" fill="#f4f4f4" stroke="#cfcfcf" stroke-width=".6"/><rect x="1" y="5" width="18" height="10" rx="2" fill="url(#pg2)" stroke="#aaa" stroke-width=".6"/><rect x="1" y="12" width="18" height="3.2" rx="1.2" fill="#767676"/><rect x="5" y="13.5" width="10" height="5" rx="1" fill="#ececec" stroke="#c8c8c8" stroke-width=".6"/><circle cx="16.3" cy="7.6" r="1" fill="#5fc24a"/><circle cx="16.3" cy="10.2" r=".9" fill="#c8b84a"/></svg>
<div class="a num" style="left:144px;line-height:28.00px;top:313.67px;height:28.00px;color:#333">07/04/25</div>
<div class="a num" style="left:235px;width:105px;text-align:right;line-height:28.00px;top:313.67px;height:28.00px;color:#333">20</div>
<div class="a" style="left:356px;width:90px;overflow:hidden;line-height:28.00px;top:313.67px;height:28.00px;color:#555;text-decoration:underline;letter-spacing:.9px">Party Rock - Eventos</div>
<div class="a mn" style="left:793px;width:137.5px;text-align:right;line-height:28.00px;top:313.67px;height:28.00px;color:#333">0,00</div>
<div class="a mn" style="left:938px;width:137.5px;text-align:right;line-height:28.00px;top:313.67px;height:28.00px;color:#333">200,00</div>
<div class="a" style="left:1092px;line-height:28.00px;top:313.67px;height:28.00px;color:#333;letter-spacing:.85px">Digitação</div>
<svg class="a" style="left:1158px;top:317.97px" width="20" height="20" viewBox="0 0 20 20"><path d="M10.5 1.9H4.3A2.6 2.6 0 0 0 1.7 4.5v11A2.6 2.6 0 0 0 4.3 18.1h11a2.6 2.6 0 0 0 2.6-2.6V9.6" fill="none" stroke="#ff8a10" stroke-width="2.8"/><path d="M8.1 11.9l6.5-6.5" stroke="#ff8000" stroke-width="4.3"/><path d="M6.4 10.2l3.4 3.4-4.9 1.5z" fill="#ff8000"/><path d="M16 4l1.6-1.6" stroke="#ff8000" stroke-width="4" stroke-linecap="round"/></svg>
<div class="a num" style="left:1204px;line-height:28.00px;top:313.67px;height:28.00px;color:#333">11/04/25</div>
<div class="a num" style="left:1298px;line-height:28.00px;top:313.67px;height:28.00px;color:#333">11/04/25</div>
<div class="a" style="left:8px;top:341.67px;width:1627px;height:26.67px;background:#eff0f2"></div>
<div class="a" style="left:55px;top:341.67px;width:1px;height:26.67px;background:#d6d8dc"></div>
<div class="a" style="left:103px;top:341.67px;width:1px;height:26.67px;background:#d6d8dc"></div>
<div class="a" style="left:135px;top:341.67px;width:1px;height:26.67px;background:#d6d8dc"></div>
<div class="a" style="left:235px;top:341.67px;width:1px;height:26.67px;background:#d6d8dc"></div>
<div class="a" style="left:348px;top:341.67px;width:1px;height:26.67px;background:#d6d8dc"></div>
<div class="a" style="left:648px;top:341.67px;width:1px;height:26.67px;background:#d6d8dc"></div>
<div class="a" style="left:793px;top:341.67px;width:1px;height:26.67px;background:#d6d8dc"></div>
<div class="a" style="left:938px;top:341.67px;width:1px;height:26.67px;background:#d6d8dc"></div>
<div class="a" style="left:1083px;top:341.67px;width:1px;height:26.67px;background:#d6d8dc"></div>
<div class="a" style="left:1195px;top:341.67px;width:1px;height:26.67px;background:#d6d8dc"></div>
<div class="a" style="left:1289px;top:341.67px;width:1px;height:26.67px;background:#d6d8dc"></div>
<div class="a" style="left:1448px;top:341.67px;width:1px;height:26.67px;background:#d6d8dc"></div>
<div class="a" style="left:22px;top:346.20px;width:15px;height:15px;background:#fff;border:1.3px solid #6e6e6e;border-radius:3px"></div>
<svg class="a" style="left:60px;top:352.00px" width="10" height="9" viewBox="0 0 10 9"><path d="M2 1.6l5.6 5M7.6 1.6l-5.6 5" stroke="#c4161c" stroke-width="2.5" stroke-linecap="round"/></svg>
<svg class="a" style="left:76px;top:346.00px" width="19" height="18" viewBox="0 0 19 18"><path d="M4.2 12.2L14.5 1.8l2.7 2.7L6.9 14.9z" fill="#f3a33c" stroke="#d9822a" stroke-width=".8"/><path d="M4.2 12.2l2.7 2.7-3.6 1.2z" fill="#f6dcb0"/><path d="M2.3 17l1.4-3.1 1.7 1.7z" fill="#333"/></svg>
<svg class="a" style="left:112px;top:344.50px" width="20" height="19" viewBox="0 0 20 19"><defs><linearGradient id="pg3" x1="0" y1="0" x2="0" y2="1"><stop offset="0" stop-color="#f8f8f8"/><stop offset=".7" stop-color="#d8d8d8"/><stop offset="1" stop-color="#a8a8a8"/></linearGradient></defs><rect x="5" y="0.5" width="10" height="6" rx="1" fill="#f4f4f4" stroke="#cfcfcf" stroke-width=".6"/><rect x="1" y="5" width="18" height="10" rx="2" fill="url(#pg3)" stroke="#aaa" stroke-width=".6"/><rect x="1" y="12" width="18" height="3.2" rx="1.2" fill="#767676"/><rect x="5" y="13.5" width="10" height="5" rx="1" fill="#ececec" stroke="#c8c8c8" stroke-width=".6"/><circle cx="16.3" cy="7.6" r="1" fill="#5fc24a"/><circle cx="16.3" cy="10.2" r=".9" fill="#c8b84a"/></svg>
<div class="a num" style="left:144px;line-height:26.67px;top:342.67px;height:26.67px;color:#333">04/04/25</div>
<div class="a num" style="left:235px;width:105px;text-align:right;line-height:26.67px;top:342.67px;height:26.67px;color:#333">19</div>
<div class="a" style="left:356px;width:90px;overflow:hidden;line-height:26.67px;top:342.67px;height:26.67px;color:#555;text-decoration:underline;letter-spacing:.9px">Alegria Eventos</div>
<div class="a mn" style="left:793px;width:137.5px;text-align:right;line-height:26.67px;top:342.67px;height:26.67px;color:#333">0,00</div>
<div class="a mn" style="left:938px;width:137.5px;text-align:right;line-height:26.67px;top:342.67px;height:26.67px;color:#333">1.800,00</div>
<div class="a" style="left:1092px;line-height:26.67px;top:342.67px;height:26.67px;color:#333;letter-spacing:1px">Aprovado</div>
<div class="a num" style="left:1204px;line-height:26.67px;top:342.67px;height:26.67px;color:#333"></div>
<div class="a num" style="left:1298px;line-height:26.67px;top:342.67px;height:26.67px;color:#333"></div>
<div class="a" style="left:8px;top:368.33px;width:1627px;height:26.67px;background:#fff"></div>
<div class="a" style="left:55px;top:368.33px;width:1px;height:26.67px;background:#d6d8dc"></div>
<div class="a" style="left:103px;top:368.33px;width:1px;height:26.67px;background:#d6d8dc"></div>
<div class="a" style="left:135px;top:368.33px;width:1px;height:26.67px;background:#d6d8dc"></div>
<div class="a" style="left:235px;top:368.33px;width:1px;height:26.67px;background:#d6d8dc"></div>
<div class="a" style="left:348px;top:368.33px;width:1px;height:26.67px;background:#d6d8dc"></div>
<div class="a" style="left:648px;top:368.33px;width:1px;height:26.67px;background:#d6d8dc"></div>
<div class="a" style="left:793px;top:368.33px;width:1px;height:26.67px;background:#d6d8dc"></div>
<div class="a" style="left:938px;top:368.33px;width:1px;height:26.67px;background:#d6d8dc"></div>
<div class="a" style="left:1083px;top:368.33px;width:1px;height:26.67px;background:#d6d8dc"></div>
<div class="a" style="left:1195px;top:368.33px;width:1px;height:26.67px;background:#d6d8dc"></div>
<div class="a" style="left:1289px;top:368.33px;width:1px;height:26.67px;background:#d6d8dc"></div>
<div class="a" style="left:1448px;top:368.33px;width:1px;height:26.67px;background:#d6d8dc"></div>
<div class="a" style="left:22px;top:372.87px;width:15px;height:15px;background:#fff;border:1.3px solid #6e6e6e;border-radius:3px"></div>
<svg class="a" style="left:60px;top:378.67px" width="10" height="9" viewBox="0 0 10 9"><path d="M2 1.6l5.6 5M7.6 1.6l-5.6 5" stroke="#c4161c" stroke-width="2.5" stroke-linecap="round"/></svg>
<svg class="a" style="left:76px;top:372.67px" width="19" height="18" viewBox="0 0 19 18"><path d="M4.2 12.2L14.5 1.8l2.7 2.7L6.9 14.9z" fill="#f3a33c" stroke="#d9822a" stroke-width=".8"/><path d="M4.2 12.2l2.7 2.7-3.6 1.2z" fill="#f6dcb0"/><path d="M2.3 17l1.4-3.1 1.7 1.7z" fill="#333"/></svg>
<svg class="a" style="left:112px;top:371.17px" width="20" height="19" viewBox="0 0 20 19"><defs><linearGradient id="pg4" x1="0" y1="0" x2="0" y2="1"><stop offset="0" stop-color="#f8f8f8"/><stop offset=".7" stop-color="#d8d8d8"/><stop offset="1" stop-color="#a8a8a8"/></linearGradient></defs><rect x="5" y="0.5" width="10" height="6" rx="1" fill="#f4f4f4" stroke="#cfcfcf" stroke-width=".6"/><rect x="1" y="5" width="18" height="10" rx="2" fill="url(#pg4)" stroke="#aaa" stroke-width=".6"/><rect x="1" y="12" width="18" height="3.2" rx="1.2" fill="#767676"/><rect x="5" y="13.5" width="10" height="5" rx="1" fill="#ececec" stroke="#c8c8c8" stroke-width=".6"/><circle cx="16.3" cy="7.6" r="1" fill="#5fc24a"/><circle cx="16.3" cy="10.2" r=".9" fill="#c8b84a"/></svg>
<div class="a num" style="left:144px;line-height:26.67px;top:369.33px;height:26.67px;color:#333">04/04/25</div>
<div class="a num" style="left:235px;width:105px;text-align:right;line-height:26.67px;top:369.33px;height:26.67px;color:#333">18</div>
<div class="a" style="left:356px;width:90px;overflow:hidden;line-height:26.67px;top:369.33px;height:26.67px;color:#555;text-decoration:underline;letter-spacing:.9px">Alegria Eventos</div>
<div class="a mn" style="left:793px;width:137.5px;text-align:right;line-height:26.67px;top:369.33px;height:26.67px;color:#333">0,00</div>
<div class="a mn" style="left:938px;width:137.5px;text-align:right;line-height:26.67px;top:369.33px;height:26.67px;color:#333">600,00</div>
<div class="a" style="left:1092px;line-height:26.67px;top:369.33px;height:26.67px;color:#333;letter-spacing:1px">Aprovado</div>
<div class="a num" style="left:1204px;line-height:26.67px;top:369.33px;height:26.67px;color:#333">11/04/25</div>
<div class="a num" style="left:1298px;line-height:26.67px;top:369.33px;height:26.67px;color:#333">11/04/25</div>
<div class="a" style="left:8px;top:395.00px;width:1627px;height:28.00px;background:#eff0f2"></div>
<div class="a" style="left:55px;top:395.00px;width:1px;height:28.00px;background:#d6d8dc"></div>
<div class="a" style="left:103px;top:395.00px;width:1px;height:28.00px;background:#d6d8dc"></div>
<div class="a" style="left:135px;top:395.00px;width:1px;height:28.00px;background:#d6d8dc"></div>
<div class="a" style="left:235px;top:395.00px;width:1px;height:28.00px;background:#d6d8dc"></div>
<div class="a" style="left:348px;top:395.00px;width:1px;height:28.00px;background:#d6d8dc"></div>
<div class="a" style="left:648px;top:395.00px;width:1px;height:28.00px;background:#d6d8dc"></div>
<div class="a" style="left:793px;top:395.00px;width:1px;height:28.00px;background:#d6d8dc"></div>
<div class="a" style="left:938px;top:395.00px;width:1px;height:28.00px;background:#d6d8dc"></div>
<div class="a" style="left:1083px;top:395.00px;width:1px;height:28.00px;background:#d6d8dc"></div>
<div class="a" style="left:1195px;top:395.00px;width:1px;height:28.00px;background:#d6d8dc"></div>
<div class="a" style="left:1289px;top:395.00px;width:1px;height:28.00px;background:#d6d8dc"></div>
<div class="a" style="left:1448px;top:395.00px;width:1px;height:28.00px;background:#d6d8dc"></div>
<div class="a" style="left:22px;top:400.20px;width:15px;height:15px;background:#fff;border:1.3px solid #6e6e6e;border-radius:3px"></div>
<svg class="a" style="left:60px;top:406.00px" width="10" height="9" viewBox="0 0 10 9"><path d="M2 1.6l5.6 5M7.6 1.6l-5.6 5" stroke="#c4161c" stroke-width="2.5" stroke-linecap="round"/></svg>
<svg class="a" style="left:76px;top:400.00px" width="19" height="18" viewBox="0 0 19 18"><path d="M4.2 12.2L14.5 1.8l2.7 2.7L6.9 14.9z" fill="#f3a33c" stroke="#d9822a" stroke-width=".8"/><path d="M4.2 12.2l2.7 2.7-3.6 1.2z" fill="#f6dcb0"/><path d="M2.3 17l1.4-3.1 1.7 1.7z" fill="#333"/></svg>
<svg class="a" style="left:112px;top:398.50px" width="20" height="19" viewBox="0 0 20 19"><defs><linearGradient id="pg5" x1="0" y1="0" x2="0" y2="1"><stop offset="0" stop-color="#f8f8f8"/><stop offset=".7" stop-color="#d8d8d8"/><stop offset="1" stop-color="#a8a8a8"/></linearGradient></defs><rect x="5" y="0.5" width="10" height="6" rx="1" fill="#f4f4f4" stroke="#cfcfcf" stroke-width=".6"/><rect x="1" y="5" width="18" height="10" rx="2" fill="url(#pg5)" stroke="#aaa" stroke-width=".6"/><rect x="1" y="12" width="18" height="3.2" rx="1.2" fill="#767676"/><rect x="5" y="13.5" width="10" height="5" rx="1" fill="#ececec" stroke="#c8c8c8" stroke-width=".6"/><circle cx="16.3" cy="7.6" r="1" fill="#5fc24a"/><circle cx="16.3" cy="10.2" r=".9" fill="#c8b84a"/></svg>
<div class="a num" style="left:144px;line-height:28.00px;top:395.00px;height:28.00px;color:#333">20/03/25</div>
<div class="a num" style="left:235px;width:105px;text-align:right;line-height:28.00px;top:395.00px;height:28.00px;color:#333">17</div>
<div class="a" style="left:356px;width:90px;overflow:hidden;line-height:28.00px;top:395.00px;height:28.00px;color:#555;text-decoration:underline;letter-spacing:.9px">Antonella A&amp;B Eventos</div>
<div class="a mn" style="left:793px;width:137.5px;text-align:right;line-height:28.00px;top:395.00px;height:28.00px;color:#333">0,00</div>
<div class="a mn" style="left:938px;width:137.5px;text-align:right;line-height:28.00px;top:395.00px;height:28.00px;color:#333">585,00</div>
<div class="a" style="left:1092px;line-height:28.00px;top:395.00px;height:28.00px;color:#333;letter-spacing:.85px">Digitação</div>
<svg class="a" style="left:1158px;top:399.30px" width="20" height="20" viewBox="0 0 20 20"><path d="M10.5 1.9H4.3A2.6 2.6 0 0 0 1.7 4.5v11A2.6 2.6 0 0 0 4.3 18.1h11a2.6 2.6 0 0 0 2.6-2.6V9.6" fill="none" stroke="#ff8a10" stroke-width="2.8"/><path d="M8.1 11.9l6.5-6.5" stroke="#ff8000" stroke-width="4.3"/><path d="M6.4 10.2l3.4 3.4-4.9 1.5z" fill="#ff8000"/><path d="M16 4l1.6-1.6" stroke="#ff8000" stroke-width="4" stroke-linecap="round"/></svg>
<div class="a num" style="left:1204px;line-height:28.00px;top:395.00px;height:28.00px;color:#333"></div>
<div class="a num" style="left:1298px;line-height:28.00px;top:395.00px;height:28.00px;color:#333"></div>
<div class="a" style="left:1456px;line-height:28.00px;top:395.00px;height:28.00px;color:#333;letter-spacing:1.02px">Cerimonialista Rozana ...</div>
<div class="a" style="left:8px;top:423.00px;width:1627px;height:28.00px;background:#fff"></div>
<div class="a" style="left:55px;top:423.00px;width:1px;height:28.00px;background:#d6d8dc"></div>
<div class="a" style="left:103px;top:423.00px;width:1px;height:28.00px;background:#d6d8dc"></div>
<div class="a" style="left:135px;top:423.00px;width:1px;height:28.00px;background:#d6d8dc"></div>
<div class="a" style="left:235px;top:423.00px;width:1px;height:28.00px;background:#d6d8dc"></div>
<div class="a" style="left:348px;top:423.00px;width:1px;height:28.00px;background:#d6d8dc"></div>
<div class="a" style="left:648px;top:423.00px;width:1px;height:28.00px;background:#d6d8dc"></div>
<div class="a" style="left:793px;top:423.00px;width:1px;height:28.00px;background:#d6d8dc"></div>
<div class="a" style="left:938px;top:423.00px;width:1px;height:28.00px;background:#d6d8dc"></div>
<div class="a" style="left:1083px;top:423.00px;width:1px;height:28.00px;background:#d6d8dc"></div>
<div class="a" style="left:1195px;top:423.00px;width:1px;height:28.00px;background:#d6d8dc"></div>
<div class="a" style="left:1289px;top:423.00px;width:1px;height:28.00px;background:#d6d8dc"></div>
<div class="a" style="left:1448px;top:423.00px;width:1px;height:28.00px;background:#d6d8dc"></div>
<div class="a" style="left:22px;top:428.20px;width:15px;height:15px;background:#fff;border:1.3px solid #6e6e6e;border-radius:3px"></div>
<svg class="a" style="left:60px;top:434.00px" width="10" height="9" viewBox="0 0 10 9"><path d="M2 1.6l5.6 5M7.6 1.6l-5.6 5" stroke="#c4161c" stroke-width="2.5" stroke-linecap="round"/></svg>
<svg class="a" style="left:76px;top:428.00px" width="19" height="18" viewBox="0 0 19 18"><path d="M4.2 12.2L14.5 1.8l2.7 2.7L6.9 14.9z" fill="#f3a33c" stroke="#d9822a" stroke-width=".8"/><path d="M4.2 12.2l2.7 2.7-3.6 1.2z" fill="#f6dcb0"/><path d="M2.3 17l1.4-3.1 1.7 1.7z" fill="#333"/></svg>
<svg class="a" style="left:112px;top:426.50px" width="20" height="19" viewBox="0 0 20 19"><defs><linearGradient id="pg6" x1="0" y1="0" x2="0" y2="1"><stop offset="0" stop-color="#f8f8f8"/><stop offset=".7" stop-color="#d8d8d8"/><stop offset="1" stop-color="#a8a8a8"/></linearGradient></defs><rect x="5" y="0.5" width="10" height="6" rx="1" fill="#f4f4f4" stroke="#cfcfcf" stroke-width=".6"/><rect x="1" y="5" width="18" height="10" rx="2" fill="url(#pg6)" stroke="#aaa" stroke-width=".6"/><rect x="1" y="12" width="18" height="3.2" rx="1.2" fill="#767676"/><rect x="5" y="13.5" width="10" height="5" rx="1" fill="#ececec" stroke="#c8c8c8" stroke-width=".6"/><circle cx="16.3" cy="7.6" r="1" fill="#5fc24a"/><circle cx="16.3" cy="10.2" r=".9" fill="#c8b84a"/></svg>
<div class="a num" style="left:144px;line-height:28.00px;top:423.00px;height:28.00px;color:#333">19/03/25</div>
<div class="a num" style="left:235px;width:105px;text-align:right;line-height:28.00px;top:423.00px;height:28.00px;color:#333">16</div>
<div class="a" style="left:356px;width:90px;overflow:hidden;line-height:28.00px;top:423.00px;height:28.00px;color:#555;text-decoration:underline;letter-spacing:.9px">Ink by Melissa</div>
<div class="a mn" style="left:793px;width:137.5px;text-align:right;line-height:28.00px;top:423.00px;height:28.00px;color:#333">0,00</div>
<div class="a mn" style="left:938px;width:137.5px;text-align:right;line-height:28.00px;top:423.00px;height:28.00px;color:#333">10.000,00</div>
<div class="a" style="left:1092px;line-height:28.00px;top:423.00px;height:28.00px;color:#333;letter-spacing:.85px">Digitação</div>
<svg class="a" style="left:1158px;top:427.30px" width="20" height="20" viewBox="0 0 20 20"><path d="M10.5 1.9H4.3A2.6 2.6 0 0 0 1.7 4.5v11A2.6 2.6 0 0 0 4.3 18.1h11a2.6 2.6 0 0 0 2.6-2.6V9.6" fill="none" stroke="#ff8a10" stroke-width="2.8"/><path d="M8.1 11.9l6.5-6.5" stroke="#ff8000" stroke-width="4.3"/><path d="M6.4 10.2l3.4 3.4-4.9 1.5z" fill="#ff8000"/><path d="M16 4l1.6-1.6" stroke="#ff8000" stroke-width="4" stroke-linecap="round"/></svg>
<div class="a num" style="left:1204px;line-height:28.00px;top:423.00px;height:28.00px;color:#333"></div>
<div class="a num" style="left:1298px;line-height:28.00px;top:423.00px;height:28.00px;color:#333"></div>
<div class="a" style="left:8px;top:451.00px;width:1627px;height:26.67px;background:#eff0f2"></div>
<div class="a" style="left:55px;top:451.00px;width:1px;height:26.67px;background:#d6d8dc"></div>
<div class="a" style="left:103px;top:451.00px;width:1px;height:26.67px;background:#d6d8dc"></div>
<div class="a" style="left:135px;top:451.00px;width:1px;height:26.67px;background:#d6d8dc"></div>
<div class="a" style="left:235px;top:451.00px;width:1px;height:26.67px;background:#d6d8dc"></div>
<div class="a" style="left:348px;top:451.00px;width:1px;height:26.67px;background:#d6d8dc"></div>
<div class="a" style="left:648px;top:451.00px;width:1px;height:26.67px;background:#d6d8dc"></div>
<div class="a" style="left:793px;top:451.00px;width:1px;height:26.67px;background:#d6d8dc"></div>
<div class="a" style="left:938px;top:451.00px;width:1px;height:26.67px;background:#d6d8dc"></div>
<div class="a" style="left:1083px;top:451.00px;width:1px;height:26.67px;background:#d6d8dc"></div>
<div class="a" style="left:1195px;top:451.00px;width:1px;height:26.67px;background:#d6d8dc"></div>
<div class="a" style="left:1289px;top:451.00px;width:1px;height:26.67px;background:#d6d8dc"></div>
<div class="a" style="left:1448px;top:451.00px;width:1px;height:26.67px;background:#d6d8dc"></div>
<div class="a" style="left:22px;top:455.53px;width:15px;height:15px;background:#fff;border:1.3px solid #6e6e6e;border-radius:3px"></div>
<svg class="a" style="left:60px;top:461.33px" width="10" height="9" viewBox="0 0 10 9"><path d="M2 1.6l5.6 5M7.6 1.6l-5.6 5" stroke="#c4161c" stroke-width="2.5" stroke-linecap="round"/></svg>
<svg class="a" style="left:76px;top:455.33px" width="19" height="18" viewBox="0 0 19 18"><path d="M4.2 12.2L14.5 1.8l2.7 2.7L6.9 14.9z" fill="#f3a33c" stroke="#d9822a" stroke-width=".8"/><path d="M4.2 12.2l2.7 2.7-3.6 1.2z" fill="#f6dcb0"/><path d="M2.3 17l1.4-3.1 1.7 1.7z" fill="#333"/></svg>
<svg class="a" style="left:112px;top:453.83px" width="20" height="19" viewBox="0 0 20 19"><defs><linearGradient id="pg7" x1="0" y1="0" x2="0" y2="1"><stop offset="0" stop-color="#f8f8f8"/><stop offset=".7" stop-color="#d8d8d8"/><stop offset="1" stop-color="#a8a8a8"/></linearGradient></defs><rect x="5" y="0.5" width="10" height="6" rx="1" fill="#f4f4f4" stroke="#cfcfcf" stroke-width=".6"/><rect x="1" y="5" width="18" height="10" rx="2" fill="url(#pg7)" stroke="#aaa" stroke-width=".6"/><rect x="1" y="12" width="18" height="3.2" rx="1.2" fill="#767676"/><rect x="5" y="13.5" width="10" height="5" rx="1" fill="#ececec" stroke="#c8c8c8" stroke-width=".6"/><circle cx="16.3" cy="7.6" r="1" fill="#5fc24a"/><circle cx="16.3" cy="10.2" r=".9" fill="#c8b84a"/></svg>
<div class="a num" style="left:144px;line-height:26.67px;top:452.00px;height:26.67px;color:#333">17/03/25</div>
<div class="a num" style="left:235px;width:105px;text-align:right;line-height:26.67px;top:452.00px;height:26.67px;color:#333">15</div>
<div class="a" style="left:356px;width:90px;overflow:hidden;line-height:26.67px;top:452.00px;height:26.67px;color:#555;text-decoration:underline;letter-spacing:.9px">Ink by Melissa</div>
<div class="a mn" style="left:793px;width:137.5px;text-align:right;line-height:26.67px;top:452.00px;height:26.67px;color:#333">0,00</div>
<div class="a mn" style="left:938px;width:137.5px;text-align:right;line-height:26.67px;top:452.00px;height:26.67px;color:#333">10.000,00</div>
<div class="a" style="left:1092px;line-height:26.67px;top:452.00px;height:26.67px;color:#333;letter-spacing:1px">Aprovado</div>
<div class="a num" style="left:1204px;line-height:26.67px;top:452.00px;height:26.67px;color:#333"></div>
<div class="a num" style="left:1298px;line-height:26.67px;top:452.00px;height:26.67px;color:#333"></div>
<div class="a" style="left:8px;top:477.67px;width:1627px;height:26.67px;background:#fff"></div>
<div class="a" style="left:55px;top:477.67px;width:1px;height:26.67px;background:#d6d8dc"></div>
<div class="a" style="left:103px;top:477.67px;width:1px;height:26.67px;background:#d6d8dc"></div>
<div class="a" style="left:135px;top:477.67px;width:1px;height:26.67px;background:#d6d8dc"></div>
<div class="a" style="left:235px;top:477.67px;width:1px;height:26.67px;background:#d6d8dc"></div>
<div class="a" style="left:348px;top:477.67px;width:1px;height:26.67px;background:#d6d8dc"></div>
<div class="a" style="left:648px;top:477.67px;width:1px;height:26.67px;background:#d6d8dc"></div>
<div class="a" style="left:793px;top:477.67px;width:1px;height:26.67px;background:#d6d8dc"></div>
<div class="a" style="left:938px;top:477.67px;width:1px;height:26.67px;background:#d6d8dc"></div>
<div class="a" style="left:1083px;top:477.67px;width:1px;height:26.67px;background:#d6d8dc"></div>
<div class="a" style="left:1195px;top:477.67px;width:1px;height:26.67px;background:#d6d8dc"></div>
<div class="a" style="left:1289px;top:477.67px;width:1px;height:26.67px;background:#d6d8dc"></div>
<div class="a" style="left:1448px;top:477.67px;width:1px;height:26.67px;background:#d6d8dc"></div>
<div class="a" style="left:22px;top:482.20px;width:15px;height:15px;background:#fff;border:1.3px solid #6e6e6e;border-radius:3px"></div>
<svg class="a" style="left:60px;top:488.00px" width="10" height="9" viewBox="0 0 10 9"><path d="M2 1.6l5.6 5M7.6 1.6l-5.6 5" stroke="#c4161c" stroke-width="2.5" stroke-linecap="round"/></svg>
<svg class="a" style="left:76px;top:482.00px" width="19" height="18" viewBox="0 0 19 18"><path d="M4.2 12.2L14.5 1.8l2.7 2.7L6.9 14.9z" fill="#f3a33c" stroke="#d9822a" stroke-width=".8"/><path d="M4.2 12.2l2.7 2.7-3.6 1.2z" fill="#f6dcb0"/><path d="M2.3 17l1.4-3.1 1.7 1.7z" fill="#333"/></svg>
<svg class="a" style="left:112px;top:480.50px" width="20" height="19" viewBox="0 0 20 19"><defs><linearGradient id="pg8" x1="0" y1="0" x2="0" y2="1"><stop offset="0" stop-color="#f8f8f8"/><stop offset=".7" stop-color="#d8d8d8"/><stop offset="1" stop-color="#a8a8a8"/></linearGradient></defs><rect x="5" y="0.5" width="10" height="6" rx="1" fill="#f4f4f4" stroke="#cfcfcf" stroke-width=".6"/><rect x="1" y="5" width="18" height="10" rx="2" fill="url(#pg8)" stroke="#aaa" stroke-width=".6"/><rect x="1" y="12" width="18" height="3.2" rx="1.2" fill="#767676"/><rect x="5" y="13.5" width="10" height="5" rx="1" fill="#ececec" stroke="#c8c8c8" stroke-width=".6"/><circle cx="16.3" cy="7.6" r="1" fill="#5fc24a"/><circle cx="16.3" cy="10.2" r=".9" fill="#c8b84a"/></svg>
<div class="a num" style="left:144px;line-height:26.67px;top:478.67px;height:26.67px;color:#333">13/03/25</div>
<div class="a num" style="left:235px;width:105px;text-align:right;line-height:26.67px;top:478.67px;height:26.67px;color:#333">14</div>
<div class="a" style="left:356px;width:90px;overflow:hidden;line-height:26.67px;top:478.67px;height:26.67px;color:#555;text-decoration:underline;letter-spacing:.9px">Mercado da Serra</div>
<div class="a mn" style="left:793px;width:137.5px;text-align:right;line-height:26.67px;top:478.67px;height:26.67px;color:#333">0,00</div>
<div class="a mn" style="left:938px;width:137.5px;text-align:right;line-height:26.67px;top:478.67px;height:26.67px;color:#333">3.040,00</div>
<div class="a" style="left:1092px;line-height:26.67px;top:478.67px;height:26.67px;color:#333;letter-spacing:1px">Aprovado</div>
<div class="a num" style="left:1204px;line-height:26.67px;top:478.67px;height:26.67px;color:#333">28/03/25</div>
<div class="a num" style="left:1298px;line-height:26.67px;top:478.67px;height:26.67px;color:#333">28/03/25</div>
<div class="a" style="left:8px;top:504.33px;width:1627px;height:26.67px;background:#eff0f2"></div>
<div class="a" style="left:55px;top:504.33px;width:1px;height:26.67px;background:#d6d8dc"></div>
<div class="a" style="left:103px;top:504.33px;width:1px;height:26.67px;background:#d6d8dc"></div>
<div class="a" style="left:135px;top:504.33px;width:1px;height:26.67px;background:#d6d8dc"></div>
<div class="a" style="left:235px;top:504.33px;width:1px;height:26.67px;background:#d6d8dc"></div>
<div class="a" style="left:348px;top:504.33px;width:1px;height:26.67px;background:#d6d8dc"></div>
<div class="a" style="left:648px;top:504.33px;width:1px;height:26.67px;background:#d6d8dc"></div>
<div class="a" style="left:793px;top:504.33px;width:1px;height:26.67px;background:#d6d8dc"></div>
<div class="a" style="left:938px;top:504.33px;width:1px;height:26.67px;background:#d6d8dc"></div>
<div class="a" style="left:1083px;top:504.33px;width:1px;height:26.67px;background:#d6d8dc"></div>
<div class="a" style="left:1195px;top:504.33px;width:1px;height:26.67px;background:#d6d8dc"></div>
<div class="a" style="left:1289px;top:504.33px;width:1px;height:26.67px;background:#d6d8dc"></div>
<div class="a" style="left:1448px;top:504.33px;width:1px;height:26.67px;background:#d6d8dc"></div>
<div class="a" style="left:22px;top:508.87px;width:15px;height:15px;background:#fff;border:1.3px solid #6e6e6e;border-radius:3px"></div>
<svg class="a" style="left:60px;top:514.67px" width="10" height="9" viewBox="0 0 10 9"><path d="M2 1.6l5.6 5M7.6 1.6l-5.6 5" stroke="#c4161c" stroke-width="2.5" stroke-linecap="round"/></svg>
<svg class="a" style="left:76px;top:508.67px" width="19" height="18" viewBox="0 0 19 18"><path d="M4.2 12.2L14.5 1.8l2.7 2.7L6.9 14.9z" fill="#f3a33c" stroke="#d9822a" stroke-width=".8"/><path d="M4.2 12.2l2.7 2.7-3.6 1.2z" fill="#f6dcb0"/><path d="M2.3 17l1.4-3.1 1.7 1.7z" fill="#333"/></svg>
<svg class="a" style="left:112px;top:507.17px" width="20" height="19" viewBox="0 0 20 19"><defs><linearGradient id="pg9" x1="0" y1="0" x2="0" y2="1"><stop offset="0" stop-color="#f8f8f8"/><stop offset=".7" stop-color="#d8d8d8"/><stop offset="1" stop-color="#a8a8a8"/></linearGradient></defs><rect x="5" y="0.5" width="10" height="6" rx="1" fill="#f4f4f4" stroke="#cfcfcf" stroke-width=".6"/><rect x="1" y="5" width="18" height="10" rx="2" fill="url(#pg9)" stroke="#aaa" stroke-width=".6"/><rect x="1" y="12" width="18" height="3.2" rx="1.2" fill="#767676"/><rect x="5" y="13.5" width="10" height="5" rx="1" fill="#ececec" stroke="#c8c8c8" stroke-width=".6"/><circle cx="16.3" cy="7.6" r="1" fill="#5fc24a"/><circle cx="16.3" cy="10.2" r=".9" fill="#c8b84a"/></svg>
<div class="a num" style="left:144px;line-height:26.67px;top:505.33px;height:26.67px;color:#333">25/02/25</div>
<div class="a num" style="left:235px;width:105px;text-align:right;line-height:26.67px;top:505.33px;height:26.67px;color:#333">13</div>
<div class="a" style="left:356px;width:90px;overflow:hidden;line-height:26.67px;top:505.33px;height:26.67px;color:#555;text-decoration:underline;letter-spacing:.9px">Raiz - Raiz Gourmet</div>
<div class="a mn" style="left:793px;width:137.5px;text-align:right;line-height:26.67px;top:505.33px;height:26.67px;color:#333">0,00</div>
<div class="a mn" style="left:938px;width:137.5px;text-align:right;line-height:26.67px;top:505.33px;height:26.67px;color:#333">120,00</div>
<div class="a" style="left:1092px;line-height:26.67px;top:505.33px;height:26.67px;color:#333;letter-spacing:1px">Aprovado</div>
<div class="a num" style="left:1204px;line-height:26.67px;top:505.33px;height:26.67px;color:#333">28/02/25</div>
<div class="a num" style="left:1298px;line-height:26.67px;top:505.33px;height:26.67px;color:#333">28/02/25</div>
<div class="a" style="left:8px;top:531.00px;width:1627px;height:26.67px;background:#fff"></div>
<div class="a" style="left:55px;top:531.00px;width:1px;height:26.67px;background:#d6d8dc"></div>
<div class="a" style="left:103px;top:531.00px;width:1px;height:26.67px;background:#d6d8dc"></div>
<div class="a" style="left:135px;top:531.00px;width:1px;height:26.67px;background:#d6d8dc"></div>
<div class="a" style="left:235px;top:531.00px;width:1px;height:26.67px;background:#d6d8dc"></div>
<div class="a" style="left:348px;top:531.00px;width:1px;height:26.67px;background:#d6d8dc"></div>
<div class="a" style="left:648px;top:531.00px;width:1px;height:26.67px;background:#d6d8dc"></div>
<div class="a" style="left:793px;top:531.00px;width:1px;height:26.67px;background:#d6d8dc"></div>
<div class="a" style="left:938px;top:531.00px;width:1px;height:26.67px;background:#d6d8dc"></div>
<div class="a" style="left:1083px;top:531.00px;width:1px;height:26.67px;background:#d6d8dc"></div>
<div class="a" style="left:1195px;top:531.00px;width:1px;height:26.67px;background:#d6d8dc"></div>
<div class="a" style="left:1289px;top:531.00px;width:1px;height:26.67px;background:#d6d8dc"></div>
<div class="a" style="left:1448px;top:531.00px;width:1px;height:26.67px;background:#d6d8dc"></div>
<div class="a" style="left:22px;top:535.53px;width:15px;height:15px;background:#fff;border:1.3px solid #6e6e6e;border-radius:3px"></div>
<svg class="a" style="left:60px;top:541.33px" width="10" height="9" viewBox="0 0 10 9"><path d="M2 1.6l5.6 5M7.6 1.6l-5.6 5" stroke="#c4161c" stroke-width="2.5" stroke-linecap="round"/></svg>
<svg class="a" style="left:76px;top:535.33px" width="19" height="18" viewBox="0 0 19 18"><path d="M4.2 12.2L14.5 1.8l2.7 2.7L6.9 14.9z" fill="#f3a33c" stroke="#d9822a" stroke-width=".8"/><path d="M4.2 12.2l2.7 2.7-3.6 1.2z" fill="#f6dcb0"/><path d="M2.3 17l1.4-3.1 1.7 1.7z" fill="#333"/></svg>
<svg class="a" style="left:112px;top:533.83px" width="20" height="19" viewBox="0 0 20 19"><defs><linearGradient id="pg10" x1="0" y1="0" x2="0" y2="1"><stop offset="0" stop-color="#f8f8f8"/><stop offset=".7" stop-color="#d8d8d8"/><stop offset="1" stop-color="#a8a8a8"/></linearGradient></defs><rect x="5" y="0.5" width="10" height="6" rx="1" fill="#f4f4f4" stroke="#cfcfcf" stroke-width=".6"/><rect x="1" y="5" width="18" height="10" rx="2" fill="url(#pg10)" stroke="#aaa" stroke-width=".6"/><rect x="1" y="12" width="18" height="3.2" rx="1.2" fill="#767676"/><rect x="5" y="13.5" width="10" height="5" rx="1" fill="#ececec" stroke="#c8c8c8" stroke-width=".6"/><circle cx="16.3" cy="7.6" r="1" fill="#5fc24a"/><circle cx="16.3" cy="10.2" r=".9" fill="#c8b84a"/></svg>
<div class="a num" style="left:144px;line-height:26.67px;top:532.00px;height:26.67px;color:#333">25/02/25</div>
<div class="a num" style="left:235px;width:105px;text-align:right;line-height:26.67px;top:532.00px;height:26.67px;color:#333">12</div>
<div class="a" style="left:356px;width:90px;overflow:hidden;line-height:26.67px;top:532.00px;height:26.67px;color:#555;text-decoration:underline;letter-spacing:.9px">Genérica - Genérica</div>
<div class="a mn" style="left:793px;width:137.5px;text-align:right;line-height:26.67px;top:532.00px;height:26.67px;color:#333">0,00</div>
<div class="a mn" style="left:938px;width:137.5px;text-align:right;line-height:26.67px;top:532.00px;height:26.67px;color:#333">750,00</div>
<div class="a" style="left:1092px;line-height:26.67px;top:532.00px;height:26.67px;color:#333;letter-spacing:1px">Aprovado</div>
<div class="a num" style="left:1204px;line-height:26.67px;top:532.00px;height:26.67px;color:#333">28/02/25</div>
<div class="a num" style="left:1298px;line-height:26.67px;top:532.00px;height:26.67px;color:#333">28/02/25</div>
<div class="a" style="left:8px;top:557.67px;width:1627px;height:26.67px;background:#eff0f2"></div>
<div class="a" style="left:55px;top:557.67px;width:1px;height:26.67px;background:#d6d8dc"></div>
<div class="a" style="left:103px;top:557.67px;width:1px;height:26.67px;background:#d6d8dc"></div>
<div class="a" style="left:135px;top:557.67px;width:1px;height:26.67px;background:#d6d8dc"></div>
<div class="a" style="left:235px;top:557.67px;width:1px;height:26.67px;background:#d6d8dc"></div>
<div class="a" style="left:348px;top:557.67px;width:1px;height:26.67px;background:#d6d8dc"></div>
<div class="a" style="left:648px;top:557.67px;width:1px;height:26.67px;background:#d6d8dc"></div>
<div class="a" style="left:793px;top:557.67px;width:1px;height:26.67px;background:#d6d8dc"></div>
<div class="a" style="left:938px;top:557.67px;width:1px;height:26.67px;background:#d6d8dc"></div>
<div class="a" style="left:1083px;top:557.67px;width:1px;height:26.67px;background:#d6d8dc"></div>
<div class="a" style="left:1195px;top:557.67px;width:1px;height:26.67px;background:#d6d8dc"></div>
<div class="a" style="left:1289px;top:557.67px;width:1px;height:26.67px;background:#d6d8dc"></div>
<div class="a" style="left:1448px;top:557.67px;width:1px;height:26.67px;background:#d6d8dc"></div>
<div class="a" style="left:22px;top:562.20px;width:15px;height:15px;background:#fff;border:1.3px solid #6e6e6e;border-radius:3px"></div>
<svg class="a" style="left:60px;top:568.00px" width="10" height="9" viewBox="0 0 10 9"><path d="M2 1.6l5.6 5M7.6 1.6l-5.6 5" stroke="#c4161c" stroke-width="2.5" stroke-linecap="round"/></svg>
<svg class="a" style="left:76px;top:562.00px" width="19" height="18" viewBox="0 0 19 18"><path d="M4.2 12.2L14.5 1.8l2.7 2.7L6.9 14.9z" fill="#f3a33c" stroke="#d9822a" stroke-width=".8"/><path d="M4.2 12.2l2.7 2.7-3.6 1.2z" fill="#f6dcb0"/><path d="M2.3 17l1.4-3.1 1.7 1.7z" fill="#333"/></svg>
<svg class="a" style="left:112px;top:560.50px" width="20" height="19" viewBox="0 0 20 19"><defs><linearGradient id="pg11" x1="0" y1="0" x2="0" y2="1"><stop offset="0" stop-color="#f8f8f8"/><stop offset=".7" stop-color="#d8d8d8"/><stop offset="1" stop-color="#a8a8a8"/></linearGradient></defs><rect x="5" y="0.5" width="10" height="6" rx="1" fill="#f4f4f4" stroke="#cfcfcf" stroke-width=".6"/><rect x="1" y="5" width="18" height="10" rx="2" fill="url(#pg11)" stroke="#aaa" stroke-width=".6"/><rect x="1" y="12" width="18" height="3.2" rx="1.2" fill="#767676"/><rect x="5" y="13.5" width="10" height="5" rx="1" fill="#ececec" stroke="#c8c8c8" stroke-width=".6"/><circle cx="16.3" cy="7.6" r="1" fill="#5fc24a"/><circle cx="16.3" cy="10.2" r=".9" fill="#c8b84a"/></svg>
<div class="a num" style="left:144px;line-height:26.67px;top:558.67px;height:26.67px;color:#333">23/01/25</div>
<div class="a num" style="left:235px;width:105px;text-align:right;line-height:26.67px;top:558.67px;height:26.67px;color:#333">11</div>
<div class="a" style="left:356px;width:90px;overflow:hidden;line-height:26.67px;top:558.67px;height:26.67px;color:#555;text-decoration:underline;letter-spacing:.9px">Padaria ABC Ltda</div>
<div class="a mn" style="left:793px;width:137.5px;text-align:right;line-height:26.67px;top:558.67px;height:26.67px;color:#333">0,00</div>
<div class="a mn" style="left:938px;width:137.5px;text-align:right;line-height:26.67px;top:558.67px;height:26.67px;color:#333">3.165,00</div>
<div class="a" style="left:1092px;line-height:26.67px;top:558.67px;height:26.67px;color:#333;letter-spacing:1px">Aprovado</div>
<div class="a num" style="left:1204px;line-height:26.67px;top:558.67px;height:26.67px;color:#333">02/01/25</div>
<div class="a num" style="left:1298px;line-height:26.67px;top:558.67px;height:26.67px;color:#333">02/01/25</div>
<div class="a" style="left:8px;top:584.33px;width:1627px;height:26.67px;background:#fff"></div>
<div class="a" style="left:55px;top:584.33px;width:1px;height:26.67px;background:#d6d8dc"></div>
<div class="a" style="left:103px;top:584.33px;width:1px;height:26.67px;background:#d6d8dc"></div>
<div class="a" style="left:135px;top:584.33px;width:1px;height:26.67px;background:#d6d8dc"></div>
<div class="a" style="left:235px;top:584.33px;width:1px;height:26.67px;background:#d6d8dc"></div>
<div class="a" style="left:348px;top:584.33px;width:1px;height:26.67px;background:#d6d8dc"></div>
<div class="a" style="left:648px;top:584.33px;width:1px;height:26.67px;background:#d6d8dc"></div>
<div class="a" style="left:793px;top:584.33px;width:1px;height:26.67px;background:#d6d8dc"></div>
<div class="a" style="left:938px;top:584.33px;width:1px;height:26.67px;background:#d6d8dc"></div>
<div class="a" style="left:1083px;top:584.33px;width:1px;height:26.67px;background:#d6d8dc"></div>
<div class="a" style="left:1195px;top:584.33px;width:1px;height:26.67px;background:#d6d8dc"></div>
<div class="a" style="left:1289px;top:584.33px;width:1px;height:26.67px;background:#d6d8dc"></div>
<div class="a" style="left:1448px;top:584.33px;width:1px;height:26.67px;background:#d6d8dc"></div>
<div class="a" style="left:22px;top:588.87px;width:15px;height:15px;background:#fff;border:1.3px solid #6e6e6e;border-radius:3px"></div>
<svg class="a" style="left:60px;top:594.67px" width="10" height="9" viewBox="0 0 10 9"><path d="M2 1.6l5.6 5M7.6 1.6l-5.6 5" stroke="#c4161c" stroke-width="2.5" stroke-linecap="round"/></svg>
<svg class="a" style="left:76px;top:588.67px" width="19" height="18" viewBox="0 0 19 18"><path d="M4.2 12.2L14.5 1.8l2.7 2.7L6.9 14.9z" fill="#f3a33c" stroke="#d9822a" stroke-width=".8"/><path d="M4.2 12.2l2.7 2.7-3.6 1.2z" fill="#f6dcb0"/><path d="M2.3 17l1.4-3.1 1.7 1.7z" fill="#333"/></svg>
<svg class="a" style="left:112px;top:587.17px" width="20" height="19" viewBox="0 0 20 19"><defs><linearGradient id="pg12" x1="0" y1="0" x2="0" y2="1"><stop offset="0" stop-color="#f8f8f8"/><stop offset=".7" stop-color="#d8d8d8"/><stop offset="1" stop-color="#a8a8a8"/></linearGradient></defs><rect x="5" y="0.5" width="10" height="6" rx="1" fill="#f4f4f4" stroke="#cfcfcf" stroke-width=".6"/><rect x="1" y="5" width="18" height="10" rx="2" fill="url(#pg12)" stroke="#aaa" stroke-width=".6"/><rect x="1" y="12" width="18" height="3.2" rx="1.2" fill="#767676"/><rect x="5" y="13.5" width="10" height="5" rx="1" fill="#ececec" stroke="#c8c8c8" stroke-width=".6"/><circle cx="16.3" cy="7.6" r="1" fill="#5fc24a"/><circle cx="16.3" cy="10.2" r=".9" fill="#c8b84a"/></svg>
<div class="a num" style="left:144px;line-height:26.67px;top:585.33px;height:26.67px;color:#333">26/12/24</div>
<div class="a num" style="left:235px;width:105px;text-align:right;line-height:26.67px;top:585.33px;height:26.67px;color:#333">10</div>
<div class="a" style="left:356px;width:90px;overflow:hidden;line-height:26.67px;top:585.33px;height:26.67px;color:#555;text-decoration:underline;letter-spacing:.9px">Padaria ABC Ltda</div>
<div class="a mn" style="left:793px;width:137.5px;text-align:right;line-height:26.67px;top:585.33px;height:26.67px;color:#333">0,00</div>
<div class="a mn" style="left:938px;width:137.5px;text-align:right;line-height:26.67px;top:585.33px;height:26.67px;color:#333">2.615,00</div>
<div class="a" style="left:1092px;line-height:26.67px;top:585.33px;height:26.67px;color:#333;letter-spacing:1px">Aprovado</div>
<div class="a num" style="left:1204px;line-height:26.67px;top:585.33px;height:26.67px;color:#333">02/01/25</div>
<div class="a num" style="left:1298px;line-height:26.67px;top:585.33px;height:26.67px;color:#333">02/01/25</div>
<div class="a" style="left:8px;top:611.00px;width:1627px;height:26.67px;background:#eff0f2"></div>
<div class="a" style="left:55px;top:611.00px;width:1px;height:26.67px;background:#d6d8dc"></div>
<div class="a" style="left:103px;top:611.00px;width:1px;height:26.67px;background:#d6d8dc"></div>
<div class="a" style="left:135px;top:611.00px;width:1px;height:26.67px;background:#d6d8dc"></div>
<div class="a" style="left:235px;top:611.00px;width:1px;height:26.67px;background:#d6d8dc"></div>
<div class="a" style="left:348px;top:611.00px;width:1px;height:26.67px;background:#d6d8dc"></div>
<div class="a" style="left:648px;top:611.00px;width:1px;height:26.67px;background:#d6d8dc"></div>
<div class="a" style="left:793px;top:611.00px;width:1px;height:26.67px;background:#d6d8dc"></div>
<div class="a" style="left:938px;top:611.00px;width:1px;height:26.67px;background:#d6d8dc"></div>
<div class="a" style="left:1083px;top:611.00px;width:1px;height:26.67px;background:#d6d8dc"></div>
<div class="a" style="left:1195px;top:611.00px;width:1px;height:26.67px;background:#d6d8dc"></div>
<div class="a" style="left:1289px;top:611.00px;width:1px;height:26.67px;background:#d6d8dc"></div>
<div class="a" style="left:1448px;top:611.00px;width:1px;height:26.67px;background:#d6d8dc"></div>
<div class="a" style="left:22px;top:615.53px;width:15px;height:15px;background:#fff;border:1.3px solid #6e6e6e;border-radius:3px"></div>
<svg class="a" style="left:60px;top:621.33px" width="10" height="9" viewBox="0 0 10 9"><path d="M2 1.6l5.6 5M7.6 1.6l-5.6 5" stroke="#c4161c" stroke-width="2.5" stroke-linecap="round"/></svg>
<svg class="a" style="left:76px;top:615.33px" width="19" height="18" viewBox="0 0 19 18"><path d="M4.2 12.2L14.5 1.8l2.7 2.7L6.9 14.9z" fill="#f3a33c" stroke="#d9822a" stroke-width=".8"/><path d="M4.2 12.2l2.7 2.7-3.6 1.2z" fill="#f6dcb0"/><path d="M2.3 17l1.4-3.1 1.7 1.7z" fill="#333"/></svg>
<svg class="a" style="left:112px;top:613.83px" width="20" height="19" viewBox="0 0 20 19"><defs><linearGradient id="pg13" x1="0" y1="0" x2="0" y2="1"><stop offset="0" stop-color="#f8f8f8"/><stop offset=".7" stop-color="#d8d8d8"/><stop offset="1" stop-color="#a8a8a8"/></linearGradient></defs><rect x="5" y="0.5" width="10" height="6" rx="1" fill="#f4f4f4" stroke="#cfcfcf" stroke-width=".6"/><rect x="1" y="5" width="18" height="10" rx="2" fill="url(#pg13)" stroke="#aaa" stroke-width=".6"/><rect x="1" y="12" width="18" height="3.2" rx="1.2" fill="#767676"/><rect x="5" y="13.5" width="10" height="5" rx="1" fill="#ececec" stroke="#c8c8c8" stroke-width=".6"/><circle cx="16.3" cy="7.6" r="1" fill="#5fc24a"/><circle cx="16.3" cy="10.2" r=".9" fill="#c8b84a"/></svg>
<div class="a num" style="left:144px;line-height:26.67px;top:612.00px;height:26.67px;color:#333">13/11/24</div>
<div class="a num" style="left:235px;width:105px;text-align:right;line-height:26.67px;top:612.00px;height:26.67px;color:#333">9</div>
<div class="a" style="left:356px;width:90px;overflow:hidden;line-height:26.67px;top:612.00px;height:26.67px;color:#555;text-decoration:underline;letter-spacing:.9px">Roberto Carlos</div>
<div class="a mn" style="left:793px;width:137.5px;text-align:right;line-height:26.67px;top:612.00px;height:26.67px;color:#333">0,00</div>
<div class="a mn" style="left:938px;width:137.5px;text-align:right;line-height:26.67px;top:612.00px;height:26.67px;color:#333">500,00</div>
<div class="a" style="left:1092px;line-height:26.67px;top:612.00px;height:26.67px;color:#333;letter-spacing:1px">Aprovado</div>
<div class="a num" style="left:1204px;line-height:26.67px;top:612.00px;height:26.67px;color:#333"></div>
<div class="a num" style="left:1298px;line-height:26.67px;top:612.00px;height:26.67px;color:#333"></div>
<div class="a" style="left:8px;top:637.67px;width:1627px;height:26.67px;background:#fff"></div>
<div class="a" style="left:55px;top:637.67px;width:1px;height:26.67px;background:#d6d8dc"></div>
<div class="a" style="left:103px;top:637.67px;width:1px;height:26.67px;background:#d6d8dc"></div>
<div class="a" style="left:135px;top:637.67px;width:1px;height:26.67px;background:#d6d8dc"></div>
<div class="a" style="left:235px;top:637.67px;width:1px;height:26.67px;background:#d6d8dc"></div>
<div class="a" style="left:348px;top:637.67px;width:1px;height:26.67px;background:#d6d8dc"></div>
<div class="a" style="left:648px;top:637.67px;width:1px;height:26.67px;background:#d6d8dc"></div>
<div class="a" style="left:793px;top:637.67px;width:1px;height:26.67px;background:#d6d8dc"></div>
<div class="a" style="left:938px;top:637.67px;width:1px;height:26.67px;background:#d6d8dc"></div>
<div class="a" style="left:1083px;top:637.67px;width:1px;height:26.67px;background:#d6d8dc"></div>
<div class="a" style="left:1195px;top:637.67px;width:1px;height:26.67px;background:#d6d8dc"></div>
<div class="a" style="left:1289px;top:637.67px;width:1px;height:26.67px;background:#d6d8dc"></div>
<div class="a" style="left:1448px;top:637.67px;width:1px;height:26.67px;background:#d6d8dc"></div>
<div class="a" style="left:22px;top:642.20px;width:15px;height:15px;background:#fff;border:1.3px solid #6e6e6e;border-radius:3px"></div>
<svg class="a" style="left:60px;top:648.00px" width="10" height="9" viewBox="0 0 10 9"><path d="M2 1.6l5.6 5M7.6 1.6l-5.6 5" stroke="#c4161c" stroke-width="2.5" stroke-linecap="round"/></svg>
<svg class="a" style="left:76px;top:642.00px" width="19" height="18" viewBox="0 0 19 18"><path d="M4.2 12.2L14.5 1.8l2.7 2.7L6.9 14.9z" fill="#f3a33c" stroke="#d9822a" stroke-width=".8"/><path d="M4.2 12.2l2.7 2.7-3.6 1.2z" fill="#f6dcb0"/><path d="M2.3 17l1.4-3.1 1.7 1.7z" fill="#333"/></svg>
<svg class="a" style="left:112px;top:640.50px" width="20" height="19" viewBox="0 0 20 19"><defs><linearGradient id="pg14" x1="0" y1="0" x2="0" y2="1"><stop offset="0" stop-color="#f8f8f8"/><stop offset=".7" stop-color="#d8d8d8"/><stop offset="1" stop-color="#a8a8a8"/></linearGradient></defs><rect x="5" y="0.5" width="10" height="6" rx="1" fill="#f4f4f4" stroke="#cfcfcf" stroke-width=".6"/><rect x="1" y="5" width="18" height="10" rx="2" fill="url(#pg14)" stroke="#aaa" stroke-width=".6"/><rect x="1" y="12" width="18" height="3.2" rx="1.2" fill="#767676"/><rect x="5" y="13.5" width="10" height="5" rx="1" fill="#ececec" stroke="#c8c8c8" stroke-width=".6"/><circle cx="16.3" cy="7.6" r="1" fill="#5fc24a"/><circle cx="16.3" cy="10.2" r=".9" fill="#c8b84a"/></svg>
<div class="a num" style="left:144px;line-height:26.67px;top:638.67px;height:26.67px;color:#333">02/07/24</div>
<div class="a num" style="left:235px;width:105px;text-align:right;line-height:26.67px;top:638.67px;height:26.67px;color:#333">1</div>
<div class="a" style="left:356px;width:90px;overflow:hidden;line-height:26.67px;top:638.67px;height:26.67px;color:#555;text-decoration:underline;letter-spacing:.9px">Ana Carolina</div>
<div class="a mn" style="left:793px;width:137.5px;text-align:right;line-height:26.67px;top:638.67px;height:26.67px;color:#333">5.566,28</div>
<div class="a mn" style="left:938px;width:137.5px;text-align:right;line-height:26.67px;top:638.67px;height:26.67px;color:#333">0,00</div>
<div class="a" style="left:1092px;line-height:26.67px;top:638.67px;height:26.67px;color:#333;letter-spacing:1px">Aprovado</div>
<div class="a num" style="left:1204px;line-height:26.67px;top:638.67px;height:26.67px;color:#333">16/07/24</div>
<div class="a num" style="left:1298px;line-height:26.67px;top:638.67px;height:26.67px;color:#333">16/07/24</div>
<div class="a" style="left:1894px;top:259px;width:19px;height:605px;background:#f9f9fa"></div>
<svg class="a" style="left:1897px;top:265px" width="13" height="10" viewBox="0 0 13 10"><path d="M1.3 8.7L6.5 1.5l5.2 7.2z" fill="#888" stroke="#888" stroke-width="1.6" stroke-linejoin="round"/></svg>
<svg class="a" style="left:1897px;top:849px" width="13" height="10" viewBox="0 0 13 10"><path d="M1.3 1.3L6.5 8.5l5.2-7.2z" fill="#888" stroke="#888" stroke-width="1.6" stroke-linejoin="round"/></svg>
<div class="a" style="left:8px;top:864px;width:1905px;height:30px;background:#f0f1f3;border-top:1px solid #a9b2bf;border-bottom:2px solid #a2aab4"></div>
<div class="a" style="left:8px;top:865px;width:1627px;height:27px;background:#c3c3c3"></div>
<div class="a" style="left:55px;top:865px;width:1px;height:27px;background:#dedfe2"></div>
<div class="a" style="left:103px;top:865px;width:1px;height:27px;background:#dedfe2"></div>
<div class="a" style="left:135px;top:865px;width:1px;height:27px;background:#dedfe2"></div>
<div class="a" style="left:235px;top:865px;width:1px;height:27px;background:#dedfe2"></div>
<div class="a" style="left:348px;top:865px;width:1px;height:27px;background:#dedfe2"></div>
<div class="a" style="left:648px;top:865px;width:1px;height:27px;background:#dedfe2"></div>
<div class="a" style="left:793px;top:865px;width:1px;height:27px;background:#dedfe2"></div>
<div class="a" style="left:938px;top:865px;width:1px;height:27px;background:#dedfe2"></div>
<div class="a" style="left:1083px;top:865px;width:1px;height:27px;background:#dedfe2"></div>
<div class="a" style="left:1195px;top:865px;width:1px;height:27px;background:#dedfe2"></div>
<div class="a" style="left:1289px;top:865px;width:1px;height:27px;background:#dedfe2"></div>
<div class="a" style="left:1448px;top:865px;width:1px;height:27px;background:#dedfe2"></div>
<div class="a" style="left:1894px;top:865px;width:1px;height:27px;background:#a3abb6"></div>
<div class="a" style="left:16px;top:871px;color:#333;font-size:13px;letter-spacing:1.15px;line-height:16px">Totais:</div>
<div class="a mn" style="left:648px;width:137.5px;text-align:right;top:871px;line-height:16px;color:#333">49.301,28</div>
<div class="a mn" style="left:793px;width:137.5px;text-align:right;top:871px;line-height:16px;color:#333">5.566,28</div>
<div class="a mn" style="left:938px;width:137.5px;text-align:right;top:871px;line-height:16px;color:#333">43.735,00</div>
<!-- MENU START -->
<div class="a" style="left:443px;top:86px;width:451px;height:756px;background:#283b53;box-shadow:1px 1px 3px 1px rgba(0,0,0,.35)"></div>
<div class="a" style="left:443px;top:111px;width:451px;height:1px;background:#c9d0d8"></div>
<div class="a" style="left:443px;top:112px;width:451px;height:1px;background:#1c2c40"></div>
<div class="a" style="left:443px;top:258px;width:451px;height:1px;background:#c9d0d8"></div>
<div class="a" style="left:443px;top:259px;width:451px;height:1px;background:#1c2c40"></div>
<div class="a" style="left:443px;top:311px;width:451px;height:1px;background:#c9d0d8"></div>
<div class="a" style="left:443px;top:312px;width:451px;height:1px;background:#1c2c40"></div>
<div class="a" style="left:443px;top:814px;width:451px;height:2px;background:#d0d7df"></div>
<div class="a" style="left:443px;top:816px;width:451px;height:26px;background:#213044"></div>
<svg class="a" style="left:445px;top:86px" width="22" height="22" viewBox="0 0 22 22"><path d="M3.7 1.2H15.6L20.4 6V20.1H3.7Z" fill="#f3f3f3" stroke="#c8c8c8" stroke-width=".7"/><path d="M15.6 1.2V6H20.4Z" fill="#dadada"/><rect x="1.6" y="6.9" width="11.5" height="11" fill="#f4fbf2" stroke="#3e9b36" stroke-width="1.6"/><path d="M3.9 9l7 7.2M10.9 9l-7 7.2" stroke="#2f8a2a" stroke-width="2.3"/><path d="M17.4 15.2v1.8l-.7 1.6" fill="none" stroke="#444" stroke-width="1.6"/></svg>
<div class="a mi" style="left:471px;top:91.20px">Exportar para CSV</div>
<div class="a mi" style="left:449.5px;top:118.50px">Curva ABC de vendas por cliente</div>
<div class="a mi" style="left:449.5px;top:142.30px">Curva ABC de vendas por item</div>
<div class="a mi" style="left:449.5px;top:166.10px">Vendas por cliente e item</div>
<div class="a mi" style="left:449.5px;top:189.90px">Vendas por vendedor e item</div>
<div class="a mi" style="left:449.5px;top:213.70px">Pedidos por cliente</div>
<div class="a mi" style="left:449.5px;top:237.50px">Ordem de embarque</div>
<div class="a mi" style="left:449.5px;top:266.90px">PedidoVenda.docx</div>
<div class="a mi" style="left:449.5px;top:291.10px">Anexos.docx</div>
<div class="a mi" style="left:449.5px;top:318.40px">Pedido Interno.docx</div>
<div class="a mi" style="left:449.5px;top:342.18px">Pedido de venda.docx</div>
<div class="a mi" style="left:449.5px;top:365.96px">Relatório de entrega.xlsx</div>
<div class="a mi" style="left:449.5px;top:389.74px">Margem de lucro e rentabilidade.xlsx</div>
<div class="a mi" style="left:449.5px;top:413.52px">Ordem de embarque.xlsx</div>
<div class="a mi" style="left:449.5px;top:437.30px">Pedido de venda (com grupos).docx</div>
<div class="a mi" style="left:449.5px;top:461.08px">Pedido de venda com moeda convertida.docx</div>
<div class="a mi" style="left:449.5px;top:484.86px">Pedido de venda.xlsx</div>
<div class="a mi" style="left:449.5px;top:508.64px">Carteira de Pedidos</div>
<div class="a mi" style="left:449.5px;top:532.42px">Comissões por representante (apenas EXCEL)</div>
<div class="a mi" style="left:449.5px;top:556.20px">Comissões por representante (com razão social)</div>
<div class="a mi" style="left:449.5px;top:579.98px">Exportar pedidos de venda no modelo de importação de pedidos</div>
<div class="a mi" style="left:449.5px;top:603.76px">Faturamento por produto (apenas EXCEL)</div>
<div class="a mi" style="left:449.5px;top:627.54px">Ordem de embarque</div>
<div class="a mi" style="left:449.5px;top:651.32px">Ordem de embarque - Necessidades (apenas EXCEL)</div>
<div class="a mi" style="left:449.5px;top:675.10px">Pedido de venda - com quantidades a faturar</div>
<div class="a mi" style="left:449.5px;top:698.88px">Pedido de venda (com foto)</div>
<div class="a mi" style="left:449.5px;top:722.66px">Pedido de venda (modelo 2)</div>
<div class="a mi" style="left:449.5px;top:746.44px">Relatório com datas de entrega e previsão</div>
<div class="a mi" style="left:449.5px;top:770.22px">Relatório da composição dos itens do pedido de venda</div>
<div class="a mi" style="left:449.5px;top:794.00px">Relatório entregas do motorista (apenas EXCEL)</div>
<div class="a mi" style="left:449.5px;top:822.20px">Configurar relatórios personalizados do pedido de venda</div>
<div class="a" style="left:442px;top:814px;width:426px;height:30px;border:3px solid #ef3d40"></div>
</body></html>
